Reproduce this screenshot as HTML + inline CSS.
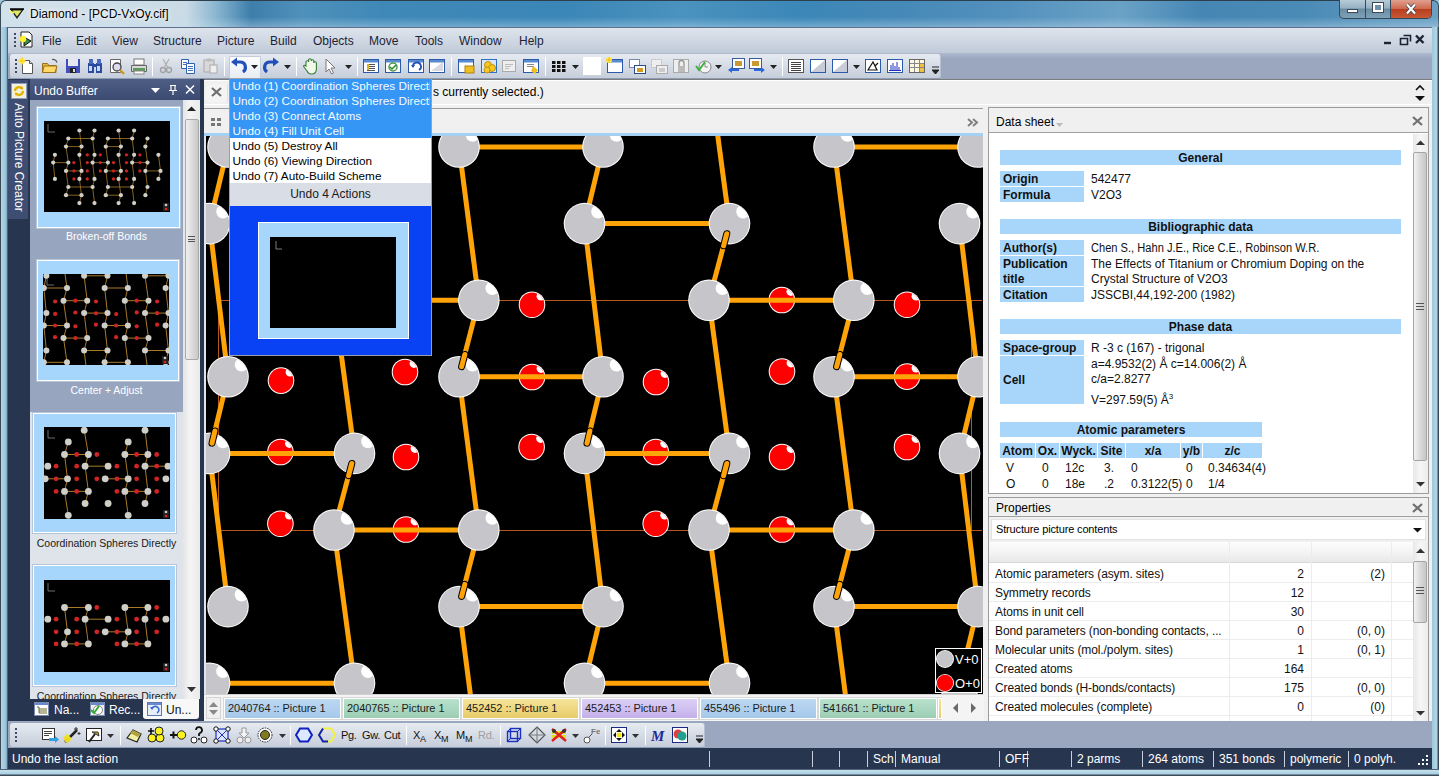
<!DOCTYPE html>
<html><head><meta charset="utf-8">
<style>
*{margin:0;padding:0;box-sizing:border-box}
html,body{width:1439px;height:776px;overflow:hidden;background:#9fc6dc;font-family:"Liberation Sans",sans-serif;font-size:12px;color:#000;line-height:1}
.a{position:absolute}
.nw{white-space:nowrap}
#title{left:0;top:0;width:1439px;height:28px;border-top:1px solid #2d3e4c;border-left:1px solid #3a4a58;border-right:1px solid #3a4a58;border-radius:6px 6px 0 0;background:linear-gradient(90deg,#d3e1ea 0,#cadbe6 185px,#8ab6d0 215px,#3d7eab 250px,#4f90bb 300px,#3f89b8 380px,#3a86b6 560px,#4a92bf 680px,#3b87b7 800px,#4689b8 900px,#5290bd 1000px,#6aa2c6 1120px,#4586b4 1200px,#4a8ab6 1300px,#6aa0c4 1439px)}
#title:after{content:"";position:absolute;left:0;top:16px;width:1439px;height:12px;background:linear-gradient(rgba(255,255,255,0),rgba(200,225,240,.45))}
#menubar{left:8px;top:27px;width:1424px;height:26px;background:linear-gradient(#dde4ed,#cdd5e1 60%,#bfc9d8);border-top:1px solid #5f6f8c}
.mi{top:41px;transform:translateY(-50%);color:#1b2336;font-size:12px}
#tbrow{left:8px;top:53px;width:1424px;height:27px;background:linear-gradient(#b0bbcf,#9aa7bf 20%,#9aa7bf)}
.tb{background:linear-gradient(#e6ebf1,#d6dce6 50%,#c6cedb);border-radius:3px;border-bottom:1px solid #8e9bb4;border-right:1px solid #b6c0d2}
.sep{width:1px;background:#9aa6bb;border-right:1px solid #fff}
.grip{width:2px;background:repeating-linear-gradient(#3e4a66 0 2px,transparent 2px 4px)}
#leftdock{left:8px;top:79px;width:196px;height:643px;background:#28354f}
#center{left:204px;top:80px;width:1228px;height:642px;background:#f0f0f0}
#info{left:204px;top:79px;width:1228px;height:26px;background:linear-gradient(#7c7c7c 0,#7c7c7c 1px,#fdfdfd 1px,#fdfdfd 2px,#f0f0f0 2px);border-bottom:1px solid #fff}
#view{left:206px;top:136px;width:777px;height:558px;background:#000;overflow:hidden}
#btbrow{left:8px;top:721px;width:1424px;height:27px;background:#9aa7bf}
#status{left:8px;top:748px;width:1424px;height:21px;background:#28354f;color:#fff}
.st{transform:translateY(-50%);font-size:12px;color:#fff}
.ss{top:3px;width:1px;height:16px;background:#c8d0e0}
</style></head><body>
<!-- TITLE -->
<div id="title" class="a"></div>
<svg class="a" style="left:9px;top:6px" width="16" height="14" viewBox="0 0 16 14"><path d="M1 3h14L8 13z" fill="#1d1d1d"/><path d="M3.5 4.5h9L8 10.5z" fill="#dfe86a"/><path d="M1 3h14" stroke="#000" stroke-width="1.5"/><path d="M0 5L5 7" stroke="#ffff40" stroke-width="1.5"/></svg>
<div class="a nw" style="left:30px;top:8px;font-size:12px;color:#000;text-shadow:0 0 6px #fff,0 0 3px #fff">Diamond - [PCD-VxOy.cif]</div>
<!-- caption buttons -->
<div class="a" style="left:1339px;top:0;width:93px;height:19px;border:1px solid #34485a;border-top:none;border-radius:0 0 5px 5px;overflow:hidden;background:linear-gradient(#b9ccd8,#94b0c2 45%,#6a8ca2 50%,#7da2b8)">
 <div class="a" style="left:25px;top:0;width:1px;height:19px;background:#34485a"></div>
 <div class="a" style="left:50px;top:0;width:42px;height:19px;background:linear-gradient(#e0a090,#cf6a50 45%,#b8401f 50%,#c85a38);border-left:1px solid #34485a"></div>
 <div class="a" style="left:7px;top:9px;width:11px;height:4px;background:#fff;border:1px solid #3a4858"></div>
 <div class="a" style="left:33px;top:3px;width:10px;height:9px;border:2px solid #fff;outline:1px solid #3a4858;background:#7090a8"></div>
 <svg class="a" style="left:64px;top:3px" width="14" height="12" viewBox="0 0 14 12"><path d="M3 1.5L11 10.5M11 1.5L3 10.5" stroke="#3a4050" stroke-width="3.6"/><path d="M3 1.5L11 10.5M11 1.5L3 10.5" stroke="#fff" stroke-width="2.2"/></svg>
</div>
<!-- FRAME -->
<div class="a" style="left:0;top:27px;width:8px;height:749px;background:linear-gradient(90deg,#3c4a58 0,#3c4a58 1px,#b4d6e6 1px,#9ec8dc 5px,#7fa8c0 7px,#50627a 7px)"></div>
<div class="a" style="left:1431px;top:27px;width:8px;height:749px;background:linear-gradient(90deg,#50627a 0,#50627a 1px,#9ec8dc 1px,#b4d6e6 6px,#3c4a58 7px)"></div>
<div class="a" style="left:0;top:769px;width:1439px;height:7px;background:linear-gradient(#50627a 0,#50627a 1px,#c4e0ec 1px,#a8d0e2 5px,#3c4a58 6px)"></div>
<!-- MENU -->
<div id="menubar" class="a"></div>
<div class="a grip" style="left:14px;top:33px;height:14px"></div>
<svg class="a" style="left:18px;top:31px" width="17" height="18" viewBox="0 0 17 18"><path d="M3 1h8l3 3v12H3z" fill="#fff" stroke="#222"/><path d="M6 6l7 4-7 5z" fill="#3a8a4a" stroke="#111"/><circle cx="5" cy="8" r="3.2" fill="#ffef30"/></svg>
<div class="a mi nw" style="left:42px">File</div>
<div class="a mi nw" style="left:76px">Edit</div>
<div class="a mi nw" style="left:112px">View</div>
<div class="a mi nw" style="left:153px">Structure</div>
<div class="a mi nw" style="left:217px">Picture</div>
<div class="a mi nw" style="left:270px">Build</div>
<div class="a mi nw" style="left:313px">Objects</div>
<div class="a mi nw" style="left:369px">Move</div>
<div class="a mi nw" style="left:415px">Tools</div>
<div class="a mi nw" style="left:459px">Window</div>
<div class="a mi nw" style="left:519px">Help</div>
<svg class="a" style="left:1380px;top:33px" width="50" height="14" viewBox="0 0 50 14"><path d="M4 10h7" stroke="#1b2336" stroke-width="2.4"/><path d="M20.5 5.5h7v6h-7zM23.5 2.5h7v6" fill="none" stroke="#1b2336" stroke-width="1.6"/><path d="M36 2.5l7.5 7.5M43.5 2.5L36 10" stroke="#1b2336" stroke-width="2.4"/></svg>
<!-- TOOLBAR ROW -->
<div id="tbrow" class="a"></div>
<div class="a tb" style="left:10px;top:54px;width:931px;height:25px"></div>
<div class="a grip" style="left:15px;top:59px;height:15px"></div>
<svg class="a" style="left:18px;top:57px" width="18" height="18" viewBox="0 0 18 18"><path d="M4.5 3.5h7l3 3v10h-10z" fill="#fff" stroke="#555"/><path d="M11.5 3.5v3h3" fill="#ddd" stroke="#555"/><circle cx="4" cy="4" r="3" fill="#ffe860"/><path d="M4 0v8M0 4h8" stroke="#ffd000"/></svg>
<svg class="a" style="left:41px;top:57px" width="18" height="18" viewBox="0 0 18 18"><path d="M1.5 6.5h5l1.5 2h7v7h-13.5z" fill="#e8b830" stroke="#9a7020"/><path d="M3 9h13l-2 6.5H1.5z" fill="#ffd868" stroke="#9a7020"/><path d="M11 2.5a4 4 0 0 1 5 3" fill="none" stroke="#555" stroke-width="1.2"/></svg>
<svg class="a" style="left:64px;top:57px" width="18" height="18" viewBox="0 0 18 18"><rect x="2" y="2" width="14" height="14" fill="#4050b8"/><rect x="4" y="2" width="10" height="7" fill="#e8e8f0"/><rect x="6" y="11" width="6" height="5" fill="#222"/><rect x="9" y="12" width="2" height="3" fill="#ddd"/></svg>
<svg class="a" style="left:86px;top:57px" width="18" height="18" viewBox="0 0 18 18"><rect x="2" y="6" width="6" height="10" fill="#2a4aa0"/><rect x="10" y="6" width="6" height="10" fill="#2a4aa0"/><rect x="3" y="2" width="4" height="5" fill="#4a6ac0"/><rect x="11" y="2" width="4" height="5" fill="#4a6ac0"/><rect x="3" y="9" width="3" height="5" fill="#c8d8f8"/><rect x="11" y="9" width="3" height="5" fill="#c8d8f8"/><rect x="7" y="7" width="4" height="3" fill="#2a4aa0"/></svg>
<svg class="a" style="left:108px;top:57px" width="18" height="18" viewBox="0 0 18 18"><path d="M2.5 2.5h10v13h-10z" fill="#fff" stroke="#666"/><circle cx="9" cy="10" r="4" fill="#dde" stroke="#444" stroke-width="1.3"/><path d="M12 13l4 4" stroke="#c89a20" stroke-width="2.4"/></svg>
<svg class="a" style="left:130px;top:57px" width="18" height="18" viewBox="0 0 18 18"><rect x="4" y="2" width="10" height="6" fill="#fff" stroke="#777"/><path d="M1.5 8.5h15v6h-15z" fill="#d8d8d8" stroke="#666"/><rect x="3" y="11" width="12" height="3" fill="#5a9a5a"/><rect x="4" y="14" width="10" height="3" fill="#fff" stroke="#888"/></svg>
<div class="a sep" style="left:152px;top:57px;height:19px"></div>
<svg class="a" style="left:157px;top:57px" width="18" height="18" viewBox="0 0 18 18"><circle cx="6" cy="13" r="2.5" fill="none" stroke="#a0a0a0" stroke-width="1.3"/><circle cx="12" cy="13" r="2.5" fill="none" stroke="#a0a0a0" stroke-width="1.3"/><path d="M7 11L12 2M11 11L6 2" stroke="#b0b0b0" stroke-width="1.3"/></svg>
<svg class="a" style="left:179px;top:57px" width="18" height="18" viewBox="0 0 18 18"><path d="M2.5 2.5h7v9h-7z" fill="#fff" stroke="#3060b0"/><path d="M7.5 6.5h8v10h-8z" fill="#fff" stroke="#3060b0"/><path d="M9 9.5h5M9 11.5h5M9 13.5h5M4 5.5h4M4 7.5h4" stroke="#4070c0"/></svg>
<svg class="a" style="left:201px;top:57px" width="18" height="18" viewBox="0 0 18 18"><rect x="3" y="3" width="10" height="12" fill="#d8d8d8" stroke="#a8a8a8"/><rect x="6" y="1.5" width="4" height="3" fill="#bbb"/><rect x="9" y="8" width="7" height="8" fill="#eee" stroke="#aaa"/></svg>
<div class="a sep" style="left:224px;top:57px;height:19px"></div>
<div class="a" style="left:229px;top:56px;width:32px;height:23px;background:linear-gradient(#fbfcfd,#e6ebf2);border:1px solid #c4cbd8;border-bottom:none;border-radius:2px 2px 0 0"></div>
<svg class="a" style="left:230px;top:57px" width="18" height="18" viewBox="0 0 18 18"><path d="M13 15c4-3 3-10-3-10H5" fill="none" stroke="#2050b8" stroke-width="3.2"/><path d="M1 5l6-4.5v9z" fill="#2050b8"/></svg>
<svg class="a" style="left:251px;top:65px" width="7" height="4" viewBox="0 0 7 4"><path d="M0 0h7L3.5 4z" fill="#222"/></svg>
<svg class="a" style="left:262px;top:57px" width="18" height="18" viewBox="0 0 18 18"><path d="M5 15c-4-3-3-10 3-10h5" fill="none" stroke="#2050b8" stroke-width="3.2"/><path d="M17 5l-6-4.5v9z" fill="#2050b8"/></svg>
<svg class="a" style="left:284px;top:65px" width="7" height="4" viewBox="0 0 7 4"><path d="M0 0h7L3.5 4z" fill="#222"/></svg>
<div class="a sep" style="left:296px;top:57px;height:19px"></div>
<svg class="a" style="left:302px;top:57px" width="18" height="18" viewBox="0 0 18 18"><path d="M4 9V5a1.3 1.3 0 0 1 2.6 0V3a1.3 1.3 0 0 1 2.6 0v1a1.3 1.3 0 0 1 2.6 0v2a1.3 1.3 0 0 1 2.6 0v6c0 3-2 5-5 5H9c-2 0-3-1-4-3L2 10c-1-1 0-2 1-1.5z" fill="#f0f8e8" stroke="#3a7a3a" stroke-width="1.1"/></svg>
<svg class="a" style="left:321px;top:57px" width="18" height="18" viewBox="0 0 18 18"><path d="M5 2v13l3-3 2.5 5 2-1-2.5-5h4z" fill="#fff" stroke="#777"/></svg>
<svg class="a" style="left:345px;top:65px" width="7" height="4" viewBox="0 0 7 4"><path d="M0 0h7L3.5 4z" fill="#222"/></svg>
<div class="a sep" style="left:357px;top:57px;height:19px"></div>
<svg class="a" style="left:362px;top:57px" width="18" height="18" viewBox="0 0 18 18"><rect x="1.5" y="2.5" width="15" height="13" fill="#fff" stroke="#2a5aa8"/><rect x="2" y="3" width="14" height="2.5" fill="#5a8ad0"/><path d="M5 7.5h8M5 9.5h8M5 11.5h8M5 13.5h8" stroke="#555"/><rect x="5" y="7" width="2" height="6" fill="#dfb020"/></svg>
<svg class="a" style="left:384px;top:57px" width="18" height="18" viewBox="0 0 18 18"><rect x="1.5" y="2.5" width="15" height="13" fill="#fff" stroke="#2a5aa8"/><rect x="2" y="3" width="14" height="2.5" fill="#5a8ad0"/><circle cx="9" cy="10" r="4" fill="#fff" stroke="#4a9a4a" stroke-width="1.5"/><path d="M6 10l2 2 4-4" stroke="#2a8a2a" stroke-width="1.5" fill="none"/></svg>
<svg class="a" style="left:407px;top:57px" width="18" height="18" viewBox="0 0 18 18"><rect x="1.5" y="2.5" width="15" height="13" fill="#fff" stroke="#2a5aa8"/><rect x="2" y="3" width="14" height="2.5" fill="#5a8ad0"/><path d="M12 13a4 4 0 1 0-6-3" fill="none" stroke="#2050b8" stroke-width="1.8"/><path d="M4 8l2 3 2-3z" fill="#2050b8"/></svg>
<svg class="a" style="left:428px;top:57px" width="18" height="18" viewBox="0 0 18 18"><rect x="1.5" y="2.5" width="15" height="13" fill="#fff" stroke="#2a5aa8"/><rect x="2" y="3" width="14" height="2.5" fill="#5a8ad0"/><path d="M3 14L15 5v9z" fill="#d8d8e0"/></svg>
<div class="a sep" style="left:451px;top:57px;height:19px"></div>
<svg class="a" style="left:457px;top:57px" width="18" height="18" viewBox="0 0 18 18"><rect x="1.5" y="2.5" width="15" height="13" fill="#fff" stroke="#2a5aa8"/><rect x="2" y="3" width="14" height="2.5" fill="#5a8ad0"/><rect x="8" y="9" width="9" height="7" fill="#f0c020" stroke="#b08010"/></svg>
<svg class="a" style="left:480px;top:57px" width="18" height="18" viewBox="0 0 18 18"><rect x="1.5" y="2.5" width="15" height="13" fill="#d8e8f8" stroke="#3070c0"/><circle cx="8" cy="8" r="3.5" fill="#f8c820" stroke="#c09010"/><circle cx="12" cy="11" r="3.5" fill="#f8c820" stroke="#c09010"/><circle cx="7" cy="13" r="3" fill="#f8c820" stroke="#c09010"/></svg>
<svg class="a" style="left:500px;top:57px" width="18" height="18" viewBox="0 0 18 18"><rect x="2.5" y="3.5" width="13" height="11" fill="#eee" stroke="#aaa"/><path d="M5 7.5h8M5 9.5h6M5 11.5h4" stroke="#bbb"/></svg>
<svg class="a" style="left:522px;top:57px" width="18" height="18" viewBox="0 0 18 18"><rect x="1.5" y="2.5" width="15" height="13" fill="#fff" stroke="#2a5aa8"/><rect x="2" y="3" width="14" height="2.5" fill="#5a8ad0"/><path d="M5 7.5h7M5 9.5h7" stroke="#888"/><path d="M11 9l5 4-3 4-4-3z" fill="#f0c020"/></svg>
<div class="a sep" style="left:545px;top:57px;height:19px"></div>
<svg class="a" style="left:550px;top:57px" width="18" height="18" viewBox="0 0 18 18"><rect x="2" y="4" width="3.5" height="3" fill="#111"/><rect x="2" y="8" width="3.5" height="3" fill="#111"/><rect x="2" y="12" width="3.5" height="3" fill="#111"/><rect x="7" y="4" width="3.5" height="3" fill="#111"/><rect x="7" y="8" width="3.5" height="3" fill="#111"/><rect x="7" y="12" width="3.5" height="3" fill="#111"/><rect x="12" y="4" width="3.5" height="3" fill="#111"/><rect x="12" y="8" width="3.5" height="3" fill="#111"/><rect x="12" y="12" width="3.5" height="3" fill="#111"/></svg>
<svg class="a" style="left:572px;top:65px" width="7" height="4" viewBox="0 0 7 4"><path d="M0 0h7L3.5 4z" fill="#222"/></svg>
<svg class="a" style="left:583px;top:57px" width="18" height="18" viewBox="0 0 18 18"><rect x="0" y="0" width="18" height="18" fill="#fff"/></svg>
<svg class="a" style="left:606px;top:57px" width="18" height="18" viewBox="0 0 18 18"><rect x="1.5" y="2.5" width="15" height="13" fill="#fff" stroke="#2a5aa8"/><rect x="2" y="3" width="14" height="2.5" fill="#5a8ad0"/><circle cx="3" cy="3" r="3" fill="#ffe860"/><path d="M3 0v6M0 3h6" stroke="#f8c000"/></svg>
<svg class="a" style="left:628px;top:57px" width="18" height="18" viewBox="0 0 18 18"><rect x="1.5" y="2.5" width="10" height="8" fill="#fff" stroke="#7a8aa8"/><rect x="6.5" y="8.5" width="11" height="8" fill="#fff" stroke="#2a4a88"/><rect x="9" y="11" width="6" height="4" fill="#d09a20"/></svg>
<svg class="a" style="left:650px;top:57px" width="18" height="18" viewBox="0 0 18 18"><rect x="1.5" y="2.5" width="10" height="8" fill="#eee" stroke="#bbb" stroke-dasharray="2 1"/><rect x="6.5" y="8.5" width="11" height="8" fill="#eee" stroke="#aaa"/><rect x="9" y="11" width="6" height="4" fill="#ccc"/></svg>
<svg class="a" style="left:672px;top:57px" width="18" height="18" viewBox="0 0 18 18"><rect x="1.5" y="2.5" width="15" height="13" fill="#eee" stroke="#aaa"/><rect x="6" y="9" width="7" height="6" fill="#bbb"/><path d="M7 9V6a2.5 2.5 0 0 1 5 0v3" fill="none" stroke="#999" stroke-width="1.3"/></svg>
<svg class="a" style="left:694px;top:57px" width="18" height="18" viewBox="0 0 18 18"><circle cx="11" cy="10" r="6" fill="#f4f4f4" stroke="#888"/><path d="M11 6v4h3" stroke="#888" fill="none"/><path d="M2 9l3 4 6-8" stroke="#40b040" stroke-width="2" fill="none"/></svg>
<svg class="a" style="left:715px;top:65px" width="7" height="4" viewBox="0 0 7 4"><path d="M0 0h7L3.5 4z" fill="#222"/></svg>
<svg class="a" style="left:727px;top:57px" width="18" height="18" viewBox="0 0 18 18"><rect x="5.5" y="1.5" width="12" height="10" fill="#fff" stroke="#3a5a9a"/><rect x="8" y="4" width="7" height="5" fill="#c89a30"/><path d="M1 13l4-3v2h7v2H5v2z" fill="#2a6ad8"/></svg>
<svg class="a" style="left:748px;top:57px" width="18" height="18" viewBox="0 0 18 18"><rect x="1.5" y="1.5" width="12" height="10" fill="#fff" stroke="#3a5a9a"/><rect x="4" y="4" width="7" height="5" fill="#c89a30"/><path d="M17 13l-4-3v2H6v2h7v2z" fill="#2a6ad8"/></svg>
<svg class="a" style="left:770px;top:65px" width="7" height="4" viewBox="0 0 7 4"><path d="M0 0h7L3.5 4z" fill="#222"/></svg>
<div class="a sep" style="left:782px;top:57px;height:19px"></div>
<svg class="a" style="left:787px;top:57px" width="18" height="18" viewBox="0 0 18 18"><rect x="1.5" y="2.5" width="15" height="13" fill="#fff" stroke="#555"/><path d="M4 5.5h10M4 7.5h10M4 9.5h10M4 11.5h10M4 13.5h10" stroke="#444"/></svg>
<svg class="a" style="left:809px;top:57px" width="18" height="18" viewBox="0 0 18 18"><rect x="1.5" y="2.5" width="15" height="13" fill="#fff" stroke="#2a5aa8"/><path d="M2 15L16 3v12z" fill="#c8ccd8"/></svg>
<svg class="a" style="left:831px;top:57px" width="18" height="18" viewBox="0 0 18 18"><rect x="1.5" y="2.5" width="15" height="13" fill="#fff" stroke="#2a5aa8"/><path d="M2 15L16 3v12z" fill="#c8ccd8"/></svg>
<svg class="a" style="left:853px;top:65px" width="7" height="4" viewBox="0 0 7 4"><path d="M0 0h7L3.5 4z" fill="#222"/></svg>
<svg class="a" style="left:864px;top:57px" width="18" height="18" viewBox="0 0 18 18"><rect x="1.5" y="2.5" width="15" height="13" fill="#fff" stroke="#2a5aa8"/><path d="M4 13L9 5l4 8zM11 9l3-3" fill="none" stroke="#111" stroke-width="1.2"/></svg>
<svg class="a" style="left:886px;top:57px" width="18" height="18" viewBox="0 0 18 18"><rect x="1.5" y="2.5" width="15" height="13" fill="#fff" stroke="#2a5aa8"/><path d="M3 13.5h12M5 13V8M7 13V6M9 13V9M11 13V5M13 13V10" stroke="#2030c0"/></svg>
<svg class="a" style="left:908px;top:57px" width="18" height="18" viewBox="0 0 18 18"><rect x="1.5" y="2.5" width="15" height="13" fill="#fff8e0" stroke="#666"/><path d="M2 6.5h14M2 10.5h14M6.5 3v12M11.5 3v12" stroke="#888"/><rect x="12" y="7" width="4" height="3" fill="#f0c040"/><rect x="12" y="11" width="4" height="4" fill="#f0c040"/></svg>
<svg class="a" style="left:932px;top:66px" width="7" height="8" viewBox="0 0 7 8"><path d="M0 1h7M0 4h7L3.5 8z" stroke="#222" fill="#222"/></svg>
<!-- LEFT DOCK -->
<div id="leftdock" class="a"></div>
<div class="a" style="left:8px;top:80px;width:20px;height:139px;background:#3e4d72"></div>
<svg class="a" style="left:11px;top:83px" width="16" height="16" viewBox="0 0 16 16"><rect x="0.5" y="0.5" width="15" height="15" fill="#f4f0d8" stroke="#8a9ac0"/><path d="M4 8a4 4 0 0 1 7-2.5M12 8a4 4 0 0 1-7 2.5" fill="none" stroke="#e0b000" stroke-width="2.2"/><path d="M11 3l1.5 3.5-3.5-.5zM5 13l-1.5-3.5 3.5.5z" fill="#e0b000"/></svg>
<div class="a nw" style="left:26px;top:103px;transform-origin:0 0;transform:rotate(90deg);color:#fff;font-size:12px;line-height:14px">Auto Picture Creator</div>
<div class="a" style="left:30px;top:79px;width:170px;height:21px;background:linear-gradient(#4e5e84,#3a4a70)"></div>
<div class="a nw" style="left:34px;top:85px;color:#fff;font-size:12px">Undo Buffer</div>
<svg class="a" style="left:150px;top:84px" width="48" height="12" viewBox="0 0 48 12"><path d="M1 4h9L5.5 9z" fill="#fff"/><path d="M20 1.5h6M21 1.5v5h4v-5M19 6.5h8M23 6.5V11" fill="none" stroke="#fff" stroke-width="1.2"/><path d="M36 1.5l8 8M44 1.5l-8 8" stroke="#fff" stroke-width="1.5"/></svg>
<div class="a" style="left:30px;top:100px;width:153px;height:312px;background:#98a5bf"></div>
<div class="a" style="left:30px;top:412px;width:153px;height:287px;background:#dfe3ea"></div>
<div class="a" style="left:183px;top:100px;width:17px;height:599px;background:linear-gradient(90deg,#e4e4e4,#f4f4f4 40%,#eaeaea)"></div>
<svg class="a" style="left:187px;top:106px" width="9" height="6" viewBox="0 0 9 6"><path d="M0 5l4.5-4.5L9 5z" fill="#222"/></svg>
<div class="a" style="left:185px;top:119px;width:14px;height:241px;background:linear-gradient(90deg,#f0f0f0,#dcdcdc 50%,#c8c8c8);border:1px solid #a8a8a8;border-radius:2px"></div>
<div class="a" style="left:188px;top:236px;width:7px;height:6px;border-top:1px solid #555;border-bottom:1px solid #555"><div style="margin-top:1.5px;border-top:1px solid #555"></div></div>
<svg class="a" style="left:187px;top:687px" width="9" height="6" viewBox="0 0 9 6"><path d="M0 0h9L4.5 5z" fill="#333"/></svg>
<div class="a" style="left:37px;top:107px;width:143px;height:121px;background:#a6d6fb;border:1px solid #fff;box-shadow:0 0 0 1px #b8c4d8"></div>
<svg class="a" style="left:44px;top:121px" width="126" height="91" viewBox="0 0 126 91"><rect width="126" height="91" fill="#000"/><path d="M4 3v8h7" stroke="#888" stroke-width="0.8" fill="none"/><g stroke="#a87a2a" stroke-width="0.8"><line x1="24.3" y1="17.5" x2="48.6" y2="17.5"/><line x1="63.9" y1="17.5" x2="88.2" y2="17.5"/><line x1="22.0" y1="25.6" x2="37.5" y2="25.6"/><line x1="61.8" y1="25.6" x2="76.9" y2="25.6"/><line x1="9.2" y1="41.6" x2="24.3" y2="41.6"/><line x1="48.6" y1="41.6" x2="63.9" y2="41.6"/><line x1="88.2" y1="41.6" x2="103.5" y2="41.6"/><line x1="22.0" y1="49.9" x2="37.5" y2="49.9"/><line x1="61.8" y1="49.9" x2="76.9" y2="49.9"/><line x1="101.4" y1="49.9" x2="116.5" y2="49.9"/><line x1="24.3" y1="66.0" x2="48.6" y2="66.0"/><line x1="63.9" y1="66.0" x2="88.2" y2="66.0"/><line x1="22.0" y1="74.2" x2="37.5" y2="74.2"/><line x1="61.8" y1="74.2" x2="76.9" y2="74.2"/><line x1="24.3" y1="17.5" x2="22.0" y2="25.6"/><line x1="22.0" y1="25.6" x2="24.3" y2="41.6"/><line x1="24.3" y1="41.6" x2="22.0" y2="49.9"/><line x1="22.0" y1="49.9" x2="24.3" y2="66.0"/><line x1="24.3" y1="66.0" x2="22.0" y2="74.2"/><line x1="35.4" y1="9.5" x2="37.5" y2="25.6"/><line x1="37.5" y1="25.6" x2="35.4" y2="33.8"/><line x1="35.4" y1="33.8" x2="37.5" y2="49.9"/><line x1="37.5" y1="49.9" x2="35.4" y2="57.9"/><line x1="35.4" y1="57.9" x2="37.5" y2="74.2"/><line x1="37.5" y1="74.2" x2="35.4" y2="82.1"/><line x1="50.5" y1="9.5" x2="48.6" y2="17.5"/><line x1="48.6" y1="17.5" x2="50.5" y2="33.8"/><line x1="50.5" y1="33.8" x2="48.6" y2="41.6"/><line x1="48.6" y1="41.6" x2="50.5" y2="57.9"/><line x1="50.5" y1="57.9" x2="48.6" y2="66.0"/><line x1="48.6" y1="66.0" x2="50.5" y2="82.1"/><line x1="63.9" y1="17.5" x2="61.8" y2="25.6"/><line x1="61.8" y1="25.6" x2="63.9" y2="41.6"/><line x1="63.9" y1="41.6" x2="61.8" y2="49.9"/><line x1="61.8" y1="49.9" x2="63.9" y2="66.0"/><line x1="63.9" y1="66.0" x2="61.8" y2="74.2"/><line x1="74.6" y1="9.5" x2="76.9" y2="25.6"/><line x1="76.9" y1="25.6" x2="74.6" y2="33.8"/><line x1="74.6" y1="33.8" x2="76.9" y2="49.9"/><line x1="76.9" y1="49.9" x2="74.6" y2="57.9"/><line x1="74.6" y1="57.9" x2="76.9" y2="74.2"/><line x1="76.9" y1="74.2" x2="74.6" y2="82.1"/><line x1="90.1" y1="9.5" x2="88.2" y2="17.5"/><line x1="88.2" y1="17.5" x2="90.1" y2="33.8"/><line x1="90.1" y1="33.8" x2="88.2" y2="41.6"/><line x1="88.2" y1="41.6" x2="90.1" y2="57.9"/><line x1="90.1" y1="57.9" x2="88.2" y2="66.0"/><line x1="88.2" y1="66.0" x2="90.1" y2="82.1"/><line x1="103.5" y1="17.5" x2="101.4" y2="25.6"/><line x1="101.4" y1="25.6" x2="103.5" y2="41.6"/><line x1="103.5" y1="41.6" x2="101.4" y2="49.9"/><line x1="101.4" y1="49.9" x2="103.5" y2="66.0"/><line x1="103.5" y1="66.0" x2="101.4" y2="74.2"/><line x1="10.9" y1="33.8" x2="9.2" y2="41.6"/><line x1="9.2" y1="41.6" x2="10.9" y2="57.9"/><line x1="114.4" y1="33.8" x2="116.5" y2="49.9"/><line x1="116.5" y1="49.9" x2="114.4" y2="57.9"/></g><circle cx="43.3" cy="33.8" r="1.6" fill="#d02424"/><circle cx="56.3" cy="33.8" r="1.6" fill="#d02424"/><circle cx="82.5" cy="33.8" r="1.6" fill="#d02424"/><circle cx="95.9" cy="33.8" r="1.6" fill="#d02424"/><circle cx="29.9" cy="41.6" r="1.6" fill="#d02424"/><circle cx="43.3" cy="41.6" r="1.6" fill="#d02424"/><circle cx="56.3" cy="41.6" r="1.6" fill="#d02424"/><circle cx="69.5" cy="41.6" r="1.6" fill="#d02424"/><circle cx="82.5" cy="41.6" r="1.6" fill="#d02424"/><circle cx="95.9" cy="41.6" r="1.6" fill="#d02424"/><circle cx="29.9" cy="49.9" r="1.6" fill="#d02424"/><circle cx="43.3" cy="49.9" r="1.6" fill="#d02424"/><circle cx="56.3" cy="49.9" r="1.6" fill="#d02424"/><circle cx="69.5" cy="49.9" r="1.6" fill="#d02424"/><circle cx="82.5" cy="49.9" r="1.6" fill="#d02424"/><circle cx="95.9" cy="49.9" r="1.6" fill="#d02424"/><circle cx="29.9" cy="57.9" r="1.6" fill="#d02424"/><circle cx="43.3" cy="57.9" r="1.6" fill="#d02424"/><circle cx="69.5" cy="57.9" r="1.6" fill="#d02424"/><circle cx="82.5" cy="57.9" r="1.6" fill="#d02424"/><circle cx="35.4" cy="9.5" r="2.1" fill="#cfcfc8"/><circle cx="50.5" cy="9.5" r="2.1" fill="#cfcfc8"/><circle cx="74.6" cy="9.5" r="2.1" fill="#cfcfc8"/><circle cx="90.1" cy="9.5" r="2.1" fill="#cfcfc8"/><circle cx="24.3" cy="17.5" r="2.1" fill="#cfcfc8"/><circle cx="48.6" cy="17.5" r="2.1" fill="#cfcfc8"/><circle cx="63.9" cy="17.5" r="2.1" fill="#cfcfc8"/><circle cx="88.2" cy="17.5" r="2.1" fill="#cfcfc8"/><circle cx="103.5" cy="17.5" r="2.1" fill="#cfcfc8"/><circle cx="22.0" cy="25.6" r="2.1" fill="#cfcfc8"/><circle cx="37.5" cy="25.6" r="2.1" fill="#cfcfc8"/><circle cx="61.8" cy="25.6" r="2.1" fill="#cfcfc8"/><circle cx="76.9" cy="25.6" r="2.1" fill="#cfcfc8"/><circle cx="101.4" cy="25.6" r="2.1" fill="#cfcfc8"/><circle cx="10.9" cy="33.8" r="2.1" fill="#cfcfc8"/><circle cx="35.4" cy="33.8" r="2.1" fill="#cfcfc8"/><circle cx="50.5" cy="33.8" r="2.1" fill="#cfcfc8"/><circle cx="74.6" cy="33.8" r="2.1" fill="#cfcfc8"/><circle cx="90.1" cy="33.8" r="2.1" fill="#cfcfc8"/><circle cx="114.4" cy="33.8" r="2.1" fill="#cfcfc8"/><circle cx="9.2" cy="41.6" r="2.1" fill="#cfcfc8"/><circle cx="24.3" cy="41.6" r="2.1" fill="#cfcfc8"/><circle cx="48.6" cy="41.6" r="2.1" fill="#cfcfc8"/><circle cx="63.9" cy="41.6" r="2.1" fill="#cfcfc8"/><circle cx="88.2" cy="41.6" r="2.1" fill="#cfcfc8"/><circle cx="103.5" cy="41.6" r="2.1" fill="#cfcfc8"/><circle cx="22.0" cy="49.9" r="2.1" fill="#cfcfc8"/><circle cx="37.5" cy="49.9" r="2.1" fill="#cfcfc8"/><circle cx="61.8" cy="49.9" r="2.1" fill="#cfcfc8"/><circle cx="76.9" cy="49.9" r="2.1" fill="#cfcfc8"/><circle cx="101.4" cy="49.9" r="2.1" fill="#cfcfc8"/><circle cx="116.5" cy="49.9" r="2.1" fill="#cfcfc8"/><circle cx="10.9" cy="57.9" r="2.1" fill="#cfcfc8"/><circle cx="35.4" cy="57.9" r="2.1" fill="#cfcfc8"/><circle cx="50.5" cy="57.9" r="2.1" fill="#cfcfc8"/><circle cx="74.6" cy="57.9" r="2.1" fill="#cfcfc8"/><circle cx="90.1" cy="57.9" r="2.1" fill="#cfcfc8"/><circle cx="114.4" cy="57.9" r="2.1" fill="#cfcfc8"/><circle cx="24.3" cy="66.0" r="2.1" fill="#cfcfc8"/><circle cx="48.6" cy="66.0" r="2.1" fill="#cfcfc8"/><circle cx="63.9" cy="66.0" r="2.1" fill="#cfcfc8"/><circle cx="88.2" cy="66.0" r="2.1" fill="#cfcfc8"/><circle cx="103.5" cy="66.0" r="2.1" fill="#cfcfc8"/><circle cx="22.0" cy="74.2" r="2.1" fill="#cfcfc8"/><circle cx="37.5" cy="74.2" r="2.1" fill="#cfcfc8"/><circle cx="61.8" cy="74.2" r="2.1" fill="#cfcfc8"/><circle cx="76.9" cy="74.2" r="2.1" fill="#cfcfc8"/><circle cx="101.4" cy="74.2" r="2.1" fill="#cfcfc8"/><circle cx="35.4" cy="82.1" r="2.1" fill="#cfcfc8"/><circle cx="50.5" cy="82.1" r="2.1" fill="#cfcfc8"/><circle cx="74.6" cy="82.1" r="2.1" fill="#cfcfc8"/><circle cx="90.1" cy="82.1" r="2.1" fill="#cfcfc8"/><rect x="119" y="82" width="6" height="8" fill="#222"/><circle cx="122" cy="84" r="1.3" fill="#ccc"/><circle cx="122" cy="88" r="1.3" fill="#d22"/></svg>
<div class="a nw" style="left:30px;width:153px;top:231px;text-align:center;color:#fff;font-size:10.5px">Broken-off Bonds</div>
<div class="a" style="left:37px;top:260px;width:142px;height:121px;background:#a6d6fb;border:1px solid #fff;box-shadow:0 0 0 1px #b8c4d8"></div>
<svg class="a" style="left:43px;top:274px" width="126" height="91" viewBox="0 0 126 91"><rect width="126" height="91" fill="#000"/><path d="M4 3v8h7" stroke="#888" stroke-width="0.8" fill="none"/><g stroke="#a87a2a" stroke-width="1"><line x1="41.1" y1="1.8" x2="64.5" y2="1.8"/><line x1="102.0" y1="1.8" x2="125.5" y2="1.8"/><line x1="41.1" y1="39.1" x2="64.5" y2="39.1"/><line x1="102.0" y1="39.1" x2="125.5" y2="39.1"/><line x1="41.1" y1="76.5" x2="64.5" y2="76.5"/><line x1="102.0" y1="76.5" x2="125.5" y2="76.5"/><line x1="0.8" y1="14.0" x2="24.0" y2="14.0"/><line x1="61.6" y1="14.0" x2="84.9" y2="14.0"/><line x1="0.8" y1="51.5" x2="24.0" y2="51.5"/><line x1="61.6" y1="51.5" x2="84.9" y2="51.5"/><line x1="0.8" y1="88.3" x2="24.0" y2="88.3"/><line x1="61.6" y1="88.3" x2="84.9" y2="88.3"/><line x1="20.5" y1="26.7" x2="44.2" y2="26.7"/><line x1="81.8" y1="26.7" x2="105.5" y2="26.7"/><line x1="20.5" y1="64.1" x2="44.2" y2="64.1"/><line x1="81.8" y1="64.1" x2="105.5" y2="64.1"/><line x1="0.8" y1="-10.8" x2="3.4" y2="1.8"/><line x1="3.4" y1="1.8" x2="0.8" y2="14.0"/><line x1="0.8" y1="14.0" x2="3.4" y2="39.1"/><line x1="3.4" y1="39.1" x2="0.8" y2="51.5"/><line x1="0.8" y1="51.5" x2="3.4" y2="76.5"/><line x1="3.4" y1="76.5" x2="0.8" y2="88.3"/><line x1="0.8" y1="88.3" x2="3.4" y2="113.4"/><line x1="61.6" y1="-10.8" x2="64.5" y2="1.8"/><line x1="64.5" y1="1.8" x2="61.6" y2="14.0"/><line x1="61.6" y1="14.0" x2="64.5" y2="39.1"/><line x1="64.5" y1="39.1" x2="61.6" y2="51.5"/><line x1="61.6" y1="51.5" x2="64.5" y2="76.5"/><line x1="64.5" y1="76.5" x2="61.6" y2="88.3"/><line x1="61.6" y1="88.3" x2="64.5" y2="113.4"/><line x1="122.6" y1="-10.8" x2="125.5" y2="1.8"/><line x1="125.5" y1="1.8" x2="122.6" y2="14.0"/><line x1="122.6" y1="14.0" x2="125.5" y2="39.1"/><line x1="125.5" y1="39.1" x2="122.6" y2="51.5"/><line x1="122.6" y1="51.5" x2="125.5" y2="76.5"/><line x1="125.5" y1="76.5" x2="122.6" y2="88.3"/><line x1="122.6" y1="88.3" x2="125.5" y2="113.4"/><line x1="20.5" y1="-10.8" x2="24.0" y2="14.0"/><line x1="24.0" y1="14.0" x2="20.5" y2="26.7"/><line x1="20.5" y1="26.7" x2="24.0" y2="51.5"/><line x1="24.0" y1="51.5" x2="20.5" y2="64.1"/><line x1="20.5" y1="64.1" x2="24.0" y2="88.3"/><line x1="24.0" y1="88.3" x2="20.5" y2="100.9"/><line x1="81.8" y1="-10.8" x2="84.9" y2="14.0"/><line x1="84.9" y1="14.0" x2="81.8" y2="26.7"/><line x1="81.8" y1="26.7" x2="84.9" y2="51.5"/><line x1="84.9" y1="51.5" x2="81.8" y2="64.1"/><line x1="81.8" y1="64.1" x2="84.9" y2="88.3"/><line x1="84.9" y1="88.3" x2="81.8" y2="100.9"/><line x1="44.2" y1="-10.8" x2="41.1" y2="1.8"/><line x1="41.1" y1="1.8" x2="44.2" y2="26.7"/><line x1="44.2" y1="26.7" x2="41.1" y2="39.1"/><line x1="41.1" y1="39.1" x2="44.2" y2="64.1"/><line x1="44.2" y1="64.1" x2="41.1" y2="76.5"/><line x1="41.1" y1="76.5" x2="44.2" y2="101.5"/><line x1="105.5" y1="-10.8" x2="102.0" y2="1.8"/><line x1="102.0" y1="1.8" x2="105.5" y2="26.7"/><line x1="105.5" y1="26.7" x2="102.0" y2="39.1"/><line x1="102.0" y1="39.1" x2="105.5" y2="64.1"/><line x1="105.5" y1="64.1" x2="102.0" y2="76.5"/><line x1="102.0" y1="76.5" x2="105.5" y2="101.5"/></g><circle cx="12.1" cy="27.5" r="2.1" fill="#d02424"/><circle cx="32.4" cy="26.7" r="2.1" fill="#d02424"/><circle cx="53.0" cy="27.5" r="2.1" fill="#d02424"/><circle cx="93.7" cy="26.7" r="2.1" fill="#d02424"/><circle cx="114.1" cy="27.5" r="2.1" fill="#d02424"/><circle cx="12.1" cy="39.9" r="2.1" fill="#d02424"/><circle cx="32.3" cy="38.5" r="2.1" fill="#d02424"/><circle cx="53.0" cy="39.3" r="2.1" fill="#d02424"/><circle cx="73.2" cy="40.1" r="2.1" fill="#d02424"/><circle cx="93.7" cy="38.4" r="2.1" fill="#d02424"/><circle cx="114.1" cy="39.2" r="2.1" fill="#d02424"/><circle cx="12.0" cy="51.5" r="2.1" fill="#d02424"/><circle cx="32.4" cy="52.3" r="2.1" fill="#d02424"/><circle cx="52.9" cy="50.7" r="2.1" fill="#d02424"/><circle cx="73.1" cy="51.5" r="2.1" fill="#d02424"/><circle cx="93.7" cy="52.3" r="2.1" fill="#d02424"/><circle cx="114.1" cy="50.7" r="2.1" fill="#d02424"/><circle cx="12.0" cy="63.2" r="2.1" fill="#d02424"/><circle cx="32.4" cy="64.1" r="2.1" fill="#d02424"/><circle cx="73.1" cy="63.2" r="2.1" fill="#d02424"/><circle cx="93.7" cy="64.1" r="2.1" fill="#d02424"/><circle cx="3.4" cy="1.8" r="3.0" fill="#cfcfc8"/><circle cx="0.8" cy="14.0" r="3.0" fill="#cfcfc8"/><circle cx="3.4" cy="39.1" r="3.0" fill="#cfcfc8"/><circle cx="0.8" cy="51.5" r="3.0" fill="#cfcfc8"/><circle cx="3.4" cy="76.5" r="3.0" fill="#cfcfc8"/><circle cx="0.8" cy="88.3" r="3.0" fill="#cfcfc8"/><circle cx="64.5" cy="1.8" r="3.0" fill="#cfcfc8"/><circle cx="61.6" cy="14.0" r="3.0" fill="#cfcfc8"/><circle cx="64.5" cy="39.1" r="3.0" fill="#cfcfc8"/><circle cx="61.6" cy="51.5" r="3.0" fill="#cfcfc8"/><circle cx="64.5" cy="76.5" r="3.0" fill="#cfcfc8"/><circle cx="61.6" cy="88.3" r="3.0" fill="#cfcfc8"/><circle cx="125.5" cy="1.8" r="3.0" fill="#cfcfc8"/><circle cx="122.6" cy="14.0" r="3.0" fill="#cfcfc8"/><circle cx="125.5" cy="39.1" r="3.0" fill="#cfcfc8"/><circle cx="122.6" cy="51.5" r="3.0" fill="#cfcfc8"/><circle cx="125.5" cy="76.5" r="3.0" fill="#cfcfc8"/><circle cx="122.6" cy="88.3" r="3.0" fill="#cfcfc8"/><circle cx="20.5" cy="-10.8" r="3.0" fill="#cfcfc8"/><circle cx="24.0" cy="14.0" r="3.0" fill="#cfcfc8"/><circle cx="20.5" cy="26.7" r="3.0" fill="#cfcfc8"/><circle cx="24.0" cy="51.5" r="3.0" fill="#cfcfc8"/><circle cx="20.5" cy="64.1" r="3.0" fill="#cfcfc8"/><circle cx="24.0" cy="88.3" r="3.0" fill="#cfcfc8"/><circle cx="81.8" cy="-10.8" r="3.0" fill="#cfcfc8"/><circle cx="84.9" cy="14.0" r="3.0" fill="#cfcfc8"/><circle cx="81.8" cy="26.7" r="3.0" fill="#cfcfc8"/><circle cx="84.9" cy="51.5" r="3.0" fill="#cfcfc8"/><circle cx="81.8" cy="64.1" r="3.0" fill="#cfcfc8"/><circle cx="84.9" cy="88.3" r="3.0" fill="#cfcfc8"/><circle cx="41.1" cy="1.8" r="3.0" fill="#cfcfc8"/><circle cx="44.2" cy="26.7" r="3.0" fill="#cfcfc8"/><circle cx="41.1" cy="39.1" r="3.0" fill="#cfcfc8"/><circle cx="44.2" cy="64.1" r="3.0" fill="#cfcfc8"/><circle cx="41.1" cy="76.5" r="3.0" fill="#cfcfc8"/><circle cx="102.0" cy="1.8" r="3.0" fill="#cfcfc8"/><circle cx="105.5" cy="26.7" r="3.0" fill="#cfcfc8"/><circle cx="102.0" cy="39.1" r="3.0" fill="#cfcfc8"/><circle cx="105.5" cy="64.1" r="3.0" fill="#cfcfc8"/><circle cx="102.0" cy="76.5" r="3.0" fill="#cfcfc8"/><rect x="119" y="82" width="6" height="8" fill="#222"/><circle cx="122" cy="84" r="1.3" fill="#ccc"/><circle cx="122" cy="88" r="1.3" fill="#d22"/></svg>
<div class="a nw" style="left:30px;width:153px;top:385px;text-align:center;color:#fff;font-size:10.5px">Center + Adjust</div>
<div class="a" style="left:33px;top:413px;width:143px;height:120px;background:#a6d6fb;border:1px solid #fff;box-shadow:0 0 0 1px #b8c4d8"></div>
<svg class="a" style="left:44px;top:427px" width="126" height="92" viewBox="0 0 126 92"><rect width="126" height="92" fill="#000"/><path d="M4 3v8h7" stroke="#888" stroke-width="0.8" fill="none"/><g stroke="#a87a2a" stroke-width="1"><line x1="20.5" y1="27.5" x2="44.4" y2="27.5"/><line x1="80.9" y1="27.5" x2="103.9" y2="27.5"/><line x1="41.1" y1="39.2" x2="64.1" y2="39.2"/><line x1="101.0" y1="39.2" x2="124.0" y2="39.2"/><line x1="1.2" y1="51.8" x2="23.5" y2="51.8"/><line x1="61.2" y1="51.8" x2="84.2" y2="51.8"/><line x1="20.5" y1="64.4" x2="44.4" y2="64.4"/><line x1="80.9" y1="64.4" x2="103.9" y2="64.4"/><line x1="40.2" y1="3.2" x2="44.4" y2="27.5"/><line x1="24.3" y1="14.9" x2="20.5" y2="27.5"/><line x1="101.0" y1="3.2" x2="103.9" y2="27.5"/><line x1="84.2" y1="14.9" x2="80.9" y2="27.5"/><line x1="20.5" y1="27.5" x2="23.5" y2="51.8"/><line x1="44.4" y1="27.5" x2="41.1" y2="39.2"/><line x1="41.1" y1="39.2" x2="44.4" y2="64.4"/><line x1="80.9" y1="27.5" x2="84.2" y2="51.8"/><line x1="103.9" y1="27.5" x2="101.0" y2="39.2"/><line x1="101.0" y1="39.2" x2="103.9" y2="64.4"/><line x1="23.5" y1="51.8" x2="20.5" y2="64.4"/><line x1="84.2" y1="51.8" x2="80.9" y2="64.4"/><line x1="20.5" y1="64.4" x2="24.3" y2="88.3"/><line x1="44.4" y1="64.4" x2="41.1" y2="76.5"/><line x1="80.9" y1="64.4" x2="84.2" y2="88.3"/><line x1="103.9" y1="64.4" x2="101.0" y2="76.5"/></g><circle cx="32.7" cy="27.5" r="2.4" fill="#d02424"/><circle cx="52.8" cy="27.5" r="2.4" fill="#d02424"/><circle cx="92.6" cy="27.5" r="2.4" fill="#d02424"/><circle cx="112.7" cy="27.5" r="2.4" fill="#d02424"/><circle cx="12.1" cy="39.2" r="2.4" fill="#d02424"/><circle cx="32.7" cy="39.2" r="2.4" fill="#d02424"/><circle cx="72.9" cy="39.2" r="2.4" fill="#d02424"/><circle cx="92.6" cy="39.2" r="2.4" fill="#d02424"/><circle cx="112.7" cy="39.2" r="2.4" fill="#d02424"/><circle cx="12.1" cy="51.8" r="2.4" fill="#d02424"/><circle cx="32.7" cy="51.8" r="2.4" fill="#d02424"/><circle cx="52.8" cy="51.8" r="2.4" fill="#d02424"/><circle cx="72.9" cy="51.8" r="2.4" fill="#d02424"/><circle cx="92.6" cy="51.8" r="2.4" fill="#d02424"/><circle cx="112.7" cy="51.8" r="2.4" fill="#d02424"/><circle cx="12.1" cy="64.4" r="2.4" fill="#d02424"/><circle cx="32.7" cy="64.4" r="2.4" fill="#d02424"/><circle cx="72.9" cy="64.4" r="2.4" fill="#d02424"/><circle cx="92.6" cy="64.4" r="2.4" fill="#d02424"/><circle cx="112.7" cy="64.4" r="2.4" fill="#d02424"/><circle cx="40.2" cy="3.2" r="3.4" fill="#cfcfc8"/><circle cx="101.0" cy="3.2" r="3.4" fill="#cfcfc8"/><circle cx="24.3" cy="14.9" r="3.4" fill="#cfcfc8"/><circle cx="84.2" cy="14.9" r="3.4" fill="#cfcfc8"/><circle cx="20.5" cy="27.5" r="3.4" fill="#cfcfc8"/><circle cx="44.4" cy="27.5" r="3.4" fill="#cfcfc8"/><circle cx="80.9" cy="27.5" r="3.4" fill="#cfcfc8"/><circle cx="103.9" cy="27.5" r="3.4" fill="#cfcfc8"/><circle cx="3.8" cy="39.2" r="3.4" fill="#cfcfc8"/><circle cx="41.1" cy="39.2" r="3.4" fill="#cfcfc8"/><circle cx="64.1" cy="39.2" r="3.4" fill="#cfcfc8"/><circle cx="101.0" cy="39.2" r="3.4" fill="#cfcfc8"/><circle cx="124.0" cy="39.2" r="3.4" fill="#cfcfc8"/><circle cx="1.2" cy="51.8" r="3.4" fill="#cfcfc8"/><circle cx="23.5" cy="51.8" r="3.4" fill="#cfcfc8"/><circle cx="61.2" cy="51.8" r="3.4" fill="#cfcfc8"/><circle cx="84.2" cy="51.8" r="3.4" fill="#cfcfc8"/><circle cx="121.9" cy="51.8" r="3.4" fill="#cfcfc8"/><circle cx="20.5" cy="64.4" r="3.4" fill="#cfcfc8"/><circle cx="44.4" cy="64.4" r="3.4" fill="#cfcfc8"/><circle cx="80.9" cy="64.4" r="3.4" fill="#cfcfc8"/><circle cx="103.9" cy="64.4" r="3.4" fill="#cfcfc8"/><circle cx="41.1" cy="76.5" r="3.4" fill="#cfcfc8"/><circle cx="64.1" cy="76.5" r="3.4" fill="#cfcfc8"/><circle cx="101.0" cy="76.5" r="3.4" fill="#cfcfc8"/><circle cx="24.3" cy="88.3" r="3.4" fill="#cfcfc8"/><circle cx="84.2" cy="88.3" r="3.4" fill="#cfcfc8"/><rect x="119" y="83" width="6" height="8" fill="#222"/><circle cx="122" cy="85" r="1.3" fill="#ccc"/><circle cx="122" cy="89" r="1.3" fill="#d22"/></svg>
<div class="a nw" style="left:30px;width:153px;top:538px;text-align:center;color:#1a1a1a;font-size:10.5px">Coordination Spheres Directly</div>
<div class="a" style="left:33px;top:565px;width:143px;height:121px;background:#a6d6fb;border:1px solid #fff;box-shadow:0 0 0 1px #b8c4d8"></div>
<svg class="a" style="left:44px;top:580px" width="126" height="92" viewBox="0 0 126 92"><rect width="126" height="92" fill="#000"/><path d="M4 3v8h7" stroke="#888" stroke-width="0.8" fill="none"/><g stroke="#a87a2a" stroke-width="1"><line x1="20.5" y1="27.5" x2="44.4" y2="27.5"/><line x1="80.9" y1="27.5" x2="103.9" y2="27.5"/><line x1="41.1" y1="39.2" x2="64.1" y2="39.2"/><line x1="61.2" y1="51.8" x2="84.2" y2="51.8"/><line x1="20.5" y1="63.9" x2="44.4" y2="63.9"/><line x1="80.9" y1="63.9" x2="103.9" y2="63.9"/><line x1="20.5" y1="27.5" x2="23.5" y2="51.8"/><line x1="44.4" y1="27.5" x2="41.1" y2="39.2"/><line x1="41.1" y1="39.2" x2="44.4" y2="63.9"/><line x1="80.9" y1="27.5" x2="84.2" y2="51.8"/><line x1="103.9" y1="27.5" x2="101.0" y2="39.2"/><line x1="101.0" y1="39.2" x2="103.9" y2="63.9"/><line x1="23.5" y1="51.8" x2="20.5" y2="63.9"/><line x1="84.2" y1="51.8" x2="80.9" y2="63.9"/></g><circle cx="52.8" cy="27.5" r="2.4" fill="#d02424"/><circle cx="112.7" cy="27.5" r="2.4" fill="#d02424"/><circle cx="12.1" cy="39.2" r="2.4" fill="#d02424"/><circle cx="32.7" cy="39.2" r="2.4" fill="#d02424"/><circle cx="72.9" cy="39.2" r="2.4" fill="#d02424"/><circle cx="92.6" cy="39.2" r="2.4" fill="#d02424"/><circle cx="112.7" cy="39.2" r="2.4" fill="#d02424"/><circle cx="12.1" cy="51.8" r="2.4" fill="#d02424"/><circle cx="32.7" cy="51.8" r="2.4" fill="#d02424"/><circle cx="52.8" cy="51.8" r="2.4" fill="#d02424"/><circle cx="72.9" cy="51.8" r="2.4" fill="#d02424"/><circle cx="92.6" cy="51.8" r="2.4" fill="#d02424"/><circle cx="112.7" cy="51.8" r="2.4" fill="#d02424"/><circle cx="12.1" cy="63.9" r="2.4" fill="#d02424"/><circle cx="32.7" cy="63.9" r="2.4" fill="#d02424"/><circle cx="72.9" cy="63.9" r="2.4" fill="#d02424"/><circle cx="92.6" cy="63.9" r="2.4" fill="#d02424"/><circle cx="20.5" cy="27.5" r="3.4" fill="#cfcfc8"/><circle cx="44.4" cy="27.5" r="3.4" fill="#cfcfc8"/><circle cx="80.9" cy="27.5" r="3.4" fill="#cfcfc8"/><circle cx="103.9" cy="27.5" r="3.4" fill="#cfcfc8"/><circle cx="3.8" cy="39.2" r="3.4" fill="#cfcfc8"/><circle cx="41.1" cy="39.2" r="3.4" fill="#cfcfc8"/><circle cx="64.1" cy="39.2" r="3.4" fill="#cfcfc8"/><circle cx="101.0" cy="39.2" r="3.4" fill="#cfcfc8"/><circle cx="121.9" cy="39.2" r="3.4" fill="#cfcfc8"/><circle cx="23.5" cy="51.8" r="3.4" fill="#cfcfc8"/><circle cx="61.2" cy="51.8" r="3.4" fill="#cfcfc8"/><circle cx="84.2" cy="51.8" r="3.4" fill="#cfcfc8"/><circle cx="20.5" cy="63.9" r="3.4" fill="#cfcfc8"/><circle cx="44.4" cy="63.9" r="3.4" fill="#cfcfc8"/><circle cx="80.9" cy="63.9" r="3.4" fill="#cfcfc8"/><circle cx="103.9" cy="63.9" r="3.4" fill="#cfcfc8"/><rect x="119" y="83" width="6" height="8" fill="#222"/><circle cx="122" cy="85" r="1.3" fill="#ccc"/><circle cx="122" cy="89" r="1.3" fill="#d22"/></svg>
<div class="a" style="left:30px;top:690px;width:153px;height:9px;overflow:hidden"><div class="nw" style="position:absolute;left:0;width:153px;top:1px;text-align:center;color:#1a1a1a;font-size:10.5px">Coordination Spheres Directly</div></div>
<svg class="a" style="left:34px;top:702px" width="15" height="14" viewBox="0 0 15 14"><rect x="0.5" y="0.5" width="14" height="13" fill="#fff" stroke="#7a8ab0"/><rect x="1" y="1" width="13" height="2" fill="#6a8ad0"/><path d="M3 5h2v6h8M5 7h8M5 9h8" stroke="#6a6a30" fill="none"/></svg>
<div class="a nw" style="left:54px;top:704px;color:#fff;font-size:12px">Na...</div>
<svg class="a" style="left:90px;top:702px" width="15" height="14" viewBox="0 0 15 14"><rect x="0.5" y="0.5" width="14" height="13" fill="#f0f0f0" stroke="#7a8ab0"/><rect x="1" y="1" width="13" height="2" fill="#6a8ad0"/><circle cx="8" cy="8" r="4.5" fill="#fff" stroke="#888"/><path d="M1 8l3 3 5-7" stroke="#3a3" stroke-width="2" fill="none"/></svg>
<div class="a nw" style="left:109px;top:704px;color:#fff;font-size:12px">Rec...</div>
<div class="a" style="left:143px;top:699px;width:56px;height:20px;background:#f8f8f8;border-radius:0 0 3px 3px"></div>
<svg class="a" style="left:147px;top:702px" width="15" height="14" viewBox="0 0 15 14"><rect x="0.5" y="0.5" width="14" height="13" fill="#e8eef8" stroke="#5a7ab0"/><rect x="1" y="1" width="13" height="2" fill="#6a8ad0"/><path d="M10 11a3.5 3.5 0 1 0-5-4" fill="none" stroke="#3a6ad0" stroke-width="1.6"/><path d="M3 5l2 3 2-3z" fill="#3a6ad0"/></svg>
<div class="a nw" style="left:166px;top:704px;color:#111;font-size:12px">Un...</div>
<!-- CENTER -->
<div id="center" class="a"></div>
<div id="info" class="a"></div>
<div class="a" style="left:206px;top:84px;width:22px;height:18px;background:#f4f4f4;border-right:1px solid #e0e0e0"></div>
<svg class="a" style="left:211px;top:87px" width="11" height="10" viewBox="0 0 11 10"><path d="M1 1l9 8M10 1L1 9" stroke="#6e6e6e" stroke-width="2.2"/></svg>
<div class="a nw" style="left:433px;top:86px;font-size:12px;color:#000">s currently selected.)</div>
<svg class="a" style="left:1413px;top:84px" width="14" height="18" viewBox="0 0 14 18"><path d="M3 6l4-4 4 4" fill="none" stroke="#111" stroke-width="1.6"/><path d="M2 12h10l-5 5z" fill="#111"/></svg>
<div class="a" style="left:204px;top:106px;width:779px;height:30px;background:#f0f0f0"></div>
<div class="a" style="left:204px;top:108px;width:779px;height:1px;background:#9c9c9c"></div>
<div class="a" style="left:204px;top:133px;width:779px;height:3px;background:#a4d0f4"></div>
<svg class="a" style="left:211px;top:118px" width="11" height="9" viewBox="0 0 11 9"><rect x="0" y="0" width="4" height="3" fill="#777"/><rect x="6" y="0" width="4" height="3" fill="#777"/><rect x="0" y="5" width="4" height="3" fill="#777"/><rect x="6" y="5" width="4" height="3" fill="#777"/></svg>
<svg class="a" style="left:967px;top:118px" width="12" height="9" viewBox="0 0 12 9"><path d="M1 1l4 3.5-4 3.5M6 1l4 3.5-4 3.5" fill="none" stroke="#808080" stroke-width="2"/></svg>
<div class="a" style="left:204px;top:136px;width:2px;height:560px;background:#dfe4f0"></div>
<div class="a" style="left:983px;top:106px;width:5px;height:616px;background:#f0f0f0"></div>
<div class="a" style="left:204px;top:694px;width:779px;height:27px;background:#f4f4f4;border-top:1px solid #d0d0d0"></div>
<div class="a" style="left:206px;top:697px;width:15px;height:22px;background:#f0f0f0;border:1px solid #d4d4d4"></div>
<svg class="a" style="left:208px;top:700px" width="11" height="17" viewBox="0 0 11 17"><path d="M1 7l4.5-5 4.5 5z" fill="#8a8a8a"/><path d="M1 10l4.5 5 4.5-5z" fill="#8a8a8a"/></svg>
<div class="a" style="left:224px;top:698px;width:117px;height:21px;background:linear-gradient(#bcd8f2,#a6c8ea);border:1px solid #fff;box-shadow:0 0 0 1px #d8d8d8"></div>
<div class="a nw" style="left:228px;top:703px;font-size:11px;color:#1c1c1c;letter-spacing:-0.05px">2040764 :: Picture 1</div>
<div class="a" style="left:343px;top:698px;width:117px;height:21px;background:linear-gradient(#b8e2cc,#9ccdb4);border:1px solid #fff;box-shadow:0 0 0 1px #d8d8d8"></div>
<div class="a nw" style="left:347px;top:703px;font-size:11px;color:#1c1c1c;letter-spacing:-0.05px">2040765 :: Picture 1</div>
<div class="a" style="left:462px;top:698px;width:117px;height:21px;background:linear-gradient(#f6e49a,#e8cc6a);border:1px solid #fff;box-shadow:0 0 0 1px #d8d8d8"></div>
<div class="a nw" style="left:466px;top:703px;font-size:11px;color:#1c1c1c;letter-spacing:-0.05px">452452 :: Picture 1</div>
<div class="a" style="left:581px;top:698px;width:117px;height:21px;background:linear-gradient(#dcd0f6,#c4b0ea);border:1px solid #fff;box-shadow:0 0 0 1px #d8d8d8"></div>
<div class="a nw" style="left:585px;top:703px;font-size:11px;color:#1c1c1c;letter-spacing:-0.05px">452453 :: Picture 1</div>
<div class="a" style="left:700px;top:698px;width:117px;height:21px;background:linear-gradient(#bcd8f2,#a6c8ea);border:1px solid #fff;box-shadow:0 0 0 1px #d8d8d8"></div>
<div class="a nw" style="left:704px;top:703px;font-size:11px;color:#1c1c1c;letter-spacing:-0.05px">455496 :: Picture 1</div>
<div class="a" style="left:819px;top:698px;width:118px;height:21px;background:linear-gradient(#b8e2cc,#9ccdb4);border:1px solid #fff;box-shadow:0 0 0 1px #d8d8d8"></div>
<div class="a nw" style="left:823px;top:703px;font-size:11px;color:#1c1c1c;letter-spacing:-0.05px">541661 :: Picture 1</div>
<div class="a" style="left:938px;top:698px;width:4px;height:21px;background:linear-gradient(#f6e49a,#e8cc6a);border:1px solid #fff;box-shadow:0 0 0 1px #d8d8d8"></div>
<div class="a" style="left:942px;top:696px;width:42px;height:24px;background:#f4f4f4"></div>
<svg class="a" style="left:950px;top:702px" width="30" height="12" viewBox="0 0 30 12"><path d="M8 1v10L3 6z" fill="#6a6a6a"/><path d="M21 1v10l5-5z" fill="#6a6a6a"/></svg>
<div id="view" class="a"><svg class="a" style="left:0;top:0" width="777" height="558" viewBox="206 136 777 558">
<defs><clipPath id="cg"><circle cx="0" cy="0" r="19.8"/></clipPath><clipPath id="cr"><circle cx="0" cy="0" r="12.3"/></clipPath></defs>
<rect x="206" y="136" width="777" height="558" fill="#000"/>
<g stroke="#b4581c" stroke-width="1" fill="none"><path d="M218.5 300.5H982M218.5 530.5H982M218.5 300.5V530.5M971.5 300.5V530.5"/></g>
<g transform="translate(281,304.7)"><circle r="13.3" fill="#fff"/><circle r="12.3" fill="#f00"/><circle cx="9" cy="-8.5" r="4.4" fill="#fff" clip-path="url(#cr)"/></g>
<g transform="translate(406,300)"><circle r="13.3" fill="#fff"/><circle r="12.3" fill="#f00"/><circle cx="9" cy="-8.5" r="4.4" fill="#fff" clip-path="url(#cr)"/></g>
<g transform="translate(532,304.7)"><circle r="13.3" fill="#fff"/><circle r="12.3" fill="#f00"/><circle cx="9" cy="-8.5" r="4.4" fill="#fff" clip-path="url(#cr)"/></g>
<g transform="translate(781.8,300)"><circle r="13.3" fill="#fff"/><circle r="12.3" fill="#f00"/><circle cx="9" cy="-8.5" r="4.4" fill="#fff" clip-path="url(#cr)"/></g>
<g transform="translate(907,304.7)"><circle r="13.3" fill="#fff"/><circle r="12.3" fill="#f00"/><circle cx="9" cy="-8.5" r="4.4" fill="#fff" clip-path="url(#cr)"/></g>
<g transform="translate(281,380.6)"><circle r="13.3" fill="#fff"/><circle r="12.3" fill="#f00"/><circle cx="9" cy="-8.5" r="4.4" fill="#fff" clip-path="url(#cr)"/></g>
<g transform="translate(405,372)"><circle r="13.3" fill="#fff"/><circle r="12.3" fill="#f00"/><circle cx="9" cy="-8.5" r="4.4" fill="#fff" clip-path="url(#cr)"/></g>
<g transform="translate(532,377)"><circle r="13.3" fill="#fff"/><circle r="12.3" fill="#f00"/><circle cx="9" cy="-8.5" r="4.4" fill="#fff" clip-path="url(#cr)"/></g>
<g transform="translate(656,382)"><circle r="13.3" fill="#fff"/><circle r="12.3" fill="#f00"/><circle cx="9" cy="-8.5" r="4.4" fill="#fff" clip-path="url(#cr)"/></g>
<g transform="translate(782,371.5)"><circle r="13.3" fill="#fff"/><circle r="12.3" fill="#f00"/><circle cx="9" cy="-8.5" r="4.4" fill="#fff" clip-path="url(#cr)"/></g>
<g transform="translate(907,376.6)"><circle r="13.3" fill="#fff"/><circle r="12.3" fill="#f00"/><circle cx="9" cy="-8.5" r="4.4" fill="#fff" clip-path="url(#cr)"/></g>
<g transform="translate(280.4,452)"><circle r="13.3" fill="#fff"/><circle r="12.3" fill="#f00"/><circle cx="9" cy="-8.5" r="4.4" fill="#fff" clip-path="url(#cr)"/></g>
<g transform="translate(406,457)"><circle r="13.3" fill="#fff"/><circle r="12.3" fill="#f00"/><circle cx="9" cy="-8.5" r="4.4" fill="#fff" clip-path="url(#cr)"/></g>
<g transform="translate(531.6,447)"><circle r="13.3" fill="#fff"/><circle r="12.3" fill="#f00"/><circle cx="9" cy="-8.5" r="4.4" fill="#fff" clip-path="url(#cr)"/></g>
<g transform="translate(655.7,452)"><circle r="13.3" fill="#fff"/><circle r="12.3" fill="#f00"/><circle cx="9" cy="-8.5" r="4.4" fill="#fff" clip-path="url(#cr)"/></g>
<g transform="translate(782,457)"><circle r="13.3" fill="#fff"/><circle r="12.3" fill="#f00"/><circle cx="9" cy="-8.5" r="4.4" fill="#fff" clip-path="url(#cr)"/></g>
<g transform="translate(907,447)"><circle r="13.3" fill="#fff"/><circle r="12.3" fill="#f00"/><circle cx="9" cy="-8.5" r="4.4" fill="#fff" clip-path="url(#cr)"/></g>
<g transform="translate(280.4,523.7)"><circle r="13.3" fill="#fff"/><circle r="12.3" fill="#f00"/><circle cx="9" cy="-8.5" r="4.4" fill="#fff" clip-path="url(#cr)"/></g>
<g transform="translate(406,529.5)"><circle r="13.3" fill="#fff"/><circle r="12.3" fill="#f00"/><circle cx="9" cy="-8.5" r="4.4" fill="#fff" clip-path="url(#cr)"/></g>
<g transform="translate(655.7,523.7)"><circle r="13.3" fill="#fff"/><circle r="12.3" fill="#f00"/><circle cx="9" cy="-8.5" r="4.4" fill="#fff" clip-path="url(#cr)"/></g>
<g transform="translate(782,529.5)"><circle r="13.3" fill="#fff"/><circle r="12.3" fill="#f00"/><circle cx="9" cy="-8.5" r="4.4" fill="#fff" clip-path="url(#cr)"/></g>
<g stroke="#ffa408" stroke-width="5" stroke-linecap="butt">
<line x1="459" y1="147.0" x2="603" y2="147.0"/>
<line x1="834" y1="147.0" x2="978" y2="147.0"/>
<line x1="459" y1="376.79999999999995" x2="603" y2="376.79999999999995"/>
<line x1="834" y1="376.79999999999995" x2="978" y2="376.79999999999995"/>
<line x1="459" y1="606.5999999999999" x2="603" y2="606.5999999999999"/>
<line x1="834" y1="606.5999999999999" x2="978" y2="606.5999999999999"/>
<line x1="209.5" y1="223.6" x2="354.5" y2="223.6"/>
<line x1="584.5" y1="223.6" x2="729.5" y2="223.6"/>
<line x1="209.5" y1="453.4" x2="354.5" y2="453.4"/>
<line x1="584.5" y1="453.4" x2="729.5" y2="453.4"/>
<line x1="209.5" y1="683.1999999999999" x2="354.5" y2="683.1999999999999"/>
<line x1="584.5" y1="683.1999999999999" x2="729.5" y2="683.1999999999999"/>
<line x1="334" y1="300.2" x2="478.8" y2="300.2"/>
<line x1="709" y1="300.2" x2="853.8" y2="300.2"/>
<line x1="334" y1="530.0" x2="478.8" y2="530.0"/>
<line x1="709" y1="530.0" x2="853.8" y2="530.0"/>
<line x1="209.5" y1="70.0" x2="228" y2="147.0"/>
<line x1="228" y1="147.0" x2="209.5" y2="223.6"/>
<line x1="209.5" y1="223.6" x2="228" y2="376.79999999999995"/>
<line x1="228" y1="376.79999999999995" x2="209.5" y2="453.4"/>
<line x1="209.5" y1="453.4" x2="228" y2="606.5999999999999"/>
<line x1="209.5" y1="683.1999999999999" x2="228" y2="837.1999999999999"/>
<line x1="584.5" y1="70.0" x2="603" y2="147.0"/>
<line x1="603" y1="147.0" x2="584.5" y2="223.6"/>
<line x1="584.5" y1="223.6" x2="603" y2="376.79999999999995"/>
<line x1="603" y1="376.79999999999995" x2="584.5" y2="453.4"/>
<line x1="584.5" y1="453.4" x2="603" y2="606.5999999999999"/>
<line x1="603" y1="606.5999999999999" x2="584.5" y2="683.1999999999999"/>
<line x1="584.5" y1="683.1999999999999" x2="603" y2="837.1999999999999"/>
<line x1="959.5" y1="70.0" x2="978" y2="147.0"/>
<line x1="959.5" y1="223.6" x2="978" y2="376.79999999999995"/>
<line x1="978" y1="376.79999999999995" x2="959.5" y2="453.4"/>
<line x1="959.5" y1="453.4" x2="978" y2="606.5999999999999"/>
<line x1="978" y1="606.5999999999999" x2="959.5" y2="683.1999999999999"/>
<line x1="959.5" y1="683.1999999999999" x2="978" y2="837.1999999999999"/>
<line x1="334" y1="70" x2="354.5" y2="223.6"/>
<line x1="354.5" y1="223.6" x2="334" y2="300.2"/>
<line x1="334" y1="300.2" x2="354.5" y2="453.4"/>
<line x1="354.5" y1="453.4" x2="334" y2="530.0"/>
<line x1="334" y1="530.0" x2="354.5" y2="683.1999999999999"/>
<line x1="354.5" y1="683.1999999999999" x2="334" y2="760.1999999999999"/>
<line x1="709" y1="70" x2="729.5" y2="223.6"/>
<line x1="729.5" y1="223.6" x2="709" y2="300.2"/>
<line x1="709" y1="300.2" x2="729.5" y2="453.4"/>
<line x1="729.5" y1="453.4" x2="709" y2="530.0"/>
<line x1="709" y1="530.0" x2="729.5" y2="683.1999999999999"/>
<line x1="729.5" y1="683.1999999999999" x2="709" y2="760.1999999999999"/>
<line x1="478.8" y1="70" x2="459" y2="147.0"/>
<line x1="459" y1="147.0" x2="478.8" y2="300.2"/>
<line x1="478.8" y1="300.2" x2="459" y2="376.79999999999995"/>
<line x1="459" y1="376.79999999999995" x2="478.8" y2="530.0"/>
<line x1="478.8" y1="530.0" x2="459" y2="606.5999999999999"/>
<line x1="459" y1="606.5999999999999" x2="478.8" y2="759.5999999999999"/>
<line x1="853.8" y1="70" x2="834" y2="147.0"/>
<line x1="834" y1="147.0" x2="853.8" y2="300.2"/>
<line x1="853.8" y1="300.2" x2="834" y2="376.79999999999995"/>
<line x1="834" y1="376.79999999999995" x2="853.8" y2="530.0"/>
<line x1="853.8" y1="530.0" x2="834" y2="606.5999999999999"/>
<line x1="834" y1="606.5999999999999" x2="853.8" y2="759.5999999999999"/>
</g>
<g transform="translate(228,147.0)"><circle r="20.8" fill="#fff"/><circle r="19.8" fill="#c6c6ca"/><circle cx="13.5" cy="-12" r="6.8" fill="#fff" clip-path="url(#cg)"/></g>
<g transform="translate(209.5,223.6)"><circle r="20.8" fill="#fff"/><circle r="19.8" fill="#c6c6ca"/><circle cx="13.5" cy="-12" r="6.8" fill="#fff" clip-path="url(#cg)"/></g>
<g transform="translate(228,376.79999999999995)"><circle r="20.8" fill="#fff"/><circle r="19.8" fill="#c6c6ca"/><circle cx="13.5" cy="-12" r="6.8" fill="#fff" clip-path="url(#cg)"/></g>
<g transform="translate(209.5,453.4)"><circle r="20.8" fill="#fff"/><circle r="19.8" fill="#c6c6ca"/><circle cx="13.5" cy="-12" r="6.8" fill="#fff" clip-path="url(#cg)"/></g>
<g transform="translate(228,606.5999999999999)"><circle r="20.8" fill="#fff"/><circle r="19.8" fill="#c6c6ca"/><circle cx="13.5" cy="-12" r="6.8" fill="#fff" clip-path="url(#cg)"/></g>
<g transform="translate(209.5,683.1999999999999)"><circle r="20.8" fill="#fff"/><circle r="19.8" fill="#c6c6ca"/><circle cx="13.5" cy="-12" r="6.8" fill="#fff" clip-path="url(#cg)"/></g>
<g transform="translate(603,147.0)"><circle r="20.8" fill="#fff"/><circle r="19.8" fill="#c6c6ca"/><circle cx="13.5" cy="-12" r="6.8" fill="#fff" clip-path="url(#cg)"/></g>
<g transform="translate(584.5,223.6)"><circle r="20.8" fill="#fff"/><circle r="19.8" fill="#c6c6ca"/><circle cx="13.5" cy="-12" r="6.8" fill="#fff" clip-path="url(#cg)"/></g>
<g transform="translate(603,376.79999999999995)"><circle r="20.8" fill="#fff"/><circle r="19.8" fill="#c6c6ca"/><circle cx="13.5" cy="-12" r="6.8" fill="#fff" clip-path="url(#cg)"/></g>
<g transform="translate(584.5,453.4)"><circle r="20.8" fill="#fff"/><circle r="19.8" fill="#c6c6ca"/><circle cx="13.5" cy="-12" r="6.8" fill="#fff" clip-path="url(#cg)"/></g>
<g transform="translate(603,606.5999999999999)"><circle r="20.8" fill="#fff"/><circle r="19.8" fill="#c6c6ca"/><circle cx="13.5" cy="-12" r="6.8" fill="#fff" clip-path="url(#cg)"/></g>
<g transform="translate(584.5,683.1999999999999)"><circle r="20.8" fill="#fff"/><circle r="19.8" fill="#c6c6ca"/><circle cx="13.5" cy="-12" r="6.8" fill="#fff" clip-path="url(#cg)"/></g>
<g transform="translate(978,147.0)"><circle r="20.8" fill="#fff"/><circle r="19.8" fill="#c6c6ca"/><circle cx="13.5" cy="-12" r="6.8" fill="#fff" clip-path="url(#cg)"/></g>
<g transform="translate(959.5,223.6)"><circle r="20.8" fill="#fff"/><circle r="19.8" fill="#c6c6ca"/><circle cx="13.5" cy="-12" r="6.8" fill="#fff" clip-path="url(#cg)"/></g>
<g transform="translate(978,376.79999999999995)"><circle r="20.8" fill="#fff"/><circle r="19.8" fill="#c6c6ca"/><circle cx="13.5" cy="-12" r="6.8" fill="#fff" clip-path="url(#cg)"/></g>
<g transform="translate(959.5,453.4)"><circle r="20.8" fill="#fff"/><circle r="19.8" fill="#c6c6ca"/><circle cx="13.5" cy="-12" r="6.8" fill="#fff" clip-path="url(#cg)"/></g>
<g transform="translate(978,606.5999999999999)"><circle r="20.8" fill="#fff"/><circle r="19.8" fill="#c6c6ca"/><circle cx="13.5" cy="-12" r="6.8" fill="#fff" clip-path="url(#cg)"/></g>
<g transform="translate(959.5,683.1999999999999)"><circle r="20.8" fill="#fff"/><circle r="19.8" fill="#c6c6ca"/><circle cx="13.5" cy="-12" r="6.8" fill="#fff" clip-path="url(#cg)"/></g>
<g transform="translate(354.5,223.6)"><circle r="20.8" fill="#fff"/><circle r="19.8" fill="#c6c6ca"/><circle cx="13.5" cy="-12" r="6.8" fill="#fff" clip-path="url(#cg)"/></g>
<g transform="translate(334,300.2)"><circle r="20.8" fill="#fff"/><circle r="19.8" fill="#c6c6ca"/><circle cx="13.5" cy="-12" r="6.8" fill="#fff" clip-path="url(#cg)"/></g>
<g transform="translate(354.5,453.4)"><circle r="20.8" fill="#fff"/><circle r="19.8" fill="#c6c6ca"/><circle cx="13.5" cy="-12" r="6.8" fill="#fff" clip-path="url(#cg)"/></g>
<g transform="translate(334,530.0)"><circle r="20.8" fill="#fff"/><circle r="19.8" fill="#c6c6ca"/><circle cx="13.5" cy="-12" r="6.8" fill="#fff" clip-path="url(#cg)"/></g>
<g transform="translate(354.5,683.1999999999999)"><circle r="20.8" fill="#fff"/><circle r="19.8" fill="#c6c6ca"/><circle cx="13.5" cy="-12" r="6.8" fill="#fff" clip-path="url(#cg)"/></g>
<g transform="translate(729.5,223.6)"><circle r="20.8" fill="#fff"/><circle r="19.8" fill="#c6c6ca"/><circle cx="13.5" cy="-12" r="6.8" fill="#fff" clip-path="url(#cg)"/></g>
<g transform="translate(709,300.2)"><circle r="20.8" fill="#fff"/><circle r="19.8" fill="#c6c6ca"/><circle cx="13.5" cy="-12" r="6.8" fill="#fff" clip-path="url(#cg)"/></g>
<g transform="translate(729.5,453.4)"><circle r="20.8" fill="#fff"/><circle r="19.8" fill="#c6c6ca"/><circle cx="13.5" cy="-12" r="6.8" fill="#fff" clip-path="url(#cg)"/></g>
<g transform="translate(709,530.0)"><circle r="20.8" fill="#fff"/><circle r="19.8" fill="#c6c6ca"/><circle cx="13.5" cy="-12" r="6.8" fill="#fff" clip-path="url(#cg)"/></g>
<g transform="translate(729.5,683.1999999999999)"><circle r="20.8" fill="#fff"/><circle r="19.8" fill="#c6c6ca"/><circle cx="13.5" cy="-12" r="6.8" fill="#fff" clip-path="url(#cg)"/></g>
<g transform="translate(459,147.0)"><circle r="20.8" fill="#fff"/><circle r="19.8" fill="#c6c6ca"/><circle cx="13.5" cy="-12" r="6.8" fill="#fff" clip-path="url(#cg)"/></g>
<g transform="translate(478.8,300.2)"><circle r="20.8" fill="#fff"/><circle r="19.8" fill="#c6c6ca"/><circle cx="13.5" cy="-12" r="6.8" fill="#fff" clip-path="url(#cg)"/></g>
<g transform="translate(459,376.79999999999995)"><circle r="20.8" fill="#fff"/><circle r="19.8" fill="#c6c6ca"/><circle cx="13.5" cy="-12" r="6.8" fill="#fff" clip-path="url(#cg)"/></g>
<g transform="translate(478.8,530.0)"><circle r="20.8" fill="#fff"/><circle r="19.8" fill="#c6c6ca"/><circle cx="13.5" cy="-12" r="6.8" fill="#fff" clip-path="url(#cg)"/></g>
<g transform="translate(459,606.5999999999999)"><circle r="20.8" fill="#fff"/><circle r="19.8" fill="#c6c6ca"/><circle cx="13.5" cy="-12" r="6.8" fill="#fff" clip-path="url(#cg)"/></g>
<g transform="translate(834,147.0)"><circle r="20.8" fill="#fff"/><circle r="19.8" fill="#c6c6ca"/><circle cx="13.5" cy="-12" r="6.8" fill="#fff" clip-path="url(#cg)"/></g>
<g transform="translate(853.8,300.2)"><circle r="20.8" fill="#fff"/><circle r="19.8" fill="#c6c6ca"/><circle cx="13.5" cy="-12" r="6.8" fill="#fff" clip-path="url(#cg)"/></g>
<g transform="translate(834,376.79999999999995)"><circle r="20.8" fill="#fff"/><circle r="19.8" fill="#c6c6ca"/><circle cx="13.5" cy="-12" r="6.8" fill="#fff" clip-path="url(#cg)"/></g>
<g transform="translate(853.8,530.0)"><circle r="20.8" fill="#fff"/><circle r="19.8" fill="#c6c6ca"/><circle cx="13.5" cy="-12" r="6.8" fill="#fff" clip-path="url(#cg)"/></g>
<g transform="translate(834,606.5999999999999)"><circle r="20.8" fill="#fff"/><circle r="19.8" fill="#c6c6ca"/><circle cx="13.5" cy="-12" r="6.8" fill="#fff" clip-path="url(#cg)"/></g>
<g><line x1="214.9" y1="431.0" x2="212.0" y2="443.2" stroke="#000" stroke-width="7" stroke-linecap="round"/><line x1="214.9" y1="431.0" x2="212.0" y2="443.2" stroke="#ffa408" stroke-width="5" stroke-linecap="round"/><line x1="589.9" y1="431.0" x2="587.0" y2="443.2" stroke="#000" stroke-width="7" stroke-linecap="round"/><line x1="589.9" y1="431.0" x2="587.0" y2="443.2" stroke="#ffa408" stroke-width="5" stroke-linecap="round"/><line x1="348.6" y1="245.8" x2="351.8" y2="233.7" stroke="#000" stroke-width="7" stroke-linecap="round"/><line x1="348.6" y1="245.8" x2="351.8" y2="233.7" stroke="#ffa408" stroke-width="5" stroke-linecap="round"/><line x1="348.6" y1="475.6" x2="351.8" y2="463.5" stroke="#000" stroke-width="7" stroke-linecap="round"/><line x1="348.6" y1="475.6" x2="351.8" y2="463.5" stroke="#ffa408" stroke-width="5" stroke-linecap="round"/><line x1="723.6" y1="245.8" x2="726.8" y2="233.7" stroke="#000" stroke-width="7" stroke-linecap="round"/><line x1="723.6" y1="245.8" x2="726.8" y2="233.7" stroke="#ffa408" stroke-width="5" stroke-linecap="round"/><line x1="723.6" y1="475.6" x2="726.8" y2="463.5" stroke="#000" stroke-width="7" stroke-linecap="round"/><line x1="723.6" y1="475.6" x2="726.8" y2="463.5" stroke="#ffa408" stroke-width="5" stroke-linecap="round"/><line x1="464.8" y1="354.5" x2="461.6" y2="366.6" stroke="#000" stroke-width="7" stroke-linecap="round"/><line x1="464.8" y1="354.5" x2="461.6" y2="366.6" stroke="#ffa408" stroke-width="5" stroke-linecap="round"/><line x1="464.8" y1="584.3" x2="461.6" y2="596.4" stroke="#000" stroke-width="7" stroke-linecap="round"/><line x1="464.8" y1="584.3" x2="461.6" y2="596.4" stroke="#ffa408" stroke-width="5" stroke-linecap="round"/><line x1="839.8" y1="354.5" x2="836.6" y2="366.6" stroke="#000" stroke-width="7" stroke-linecap="round"/><line x1="839.8" y1="354.5" x2="836.6" y2="366.6" stroke="#ffa408" stroke-width="5" stroke-linecap="round"/><line x1="839.8" y1="584.3" x2="836.6" y2="596.4" stroke="#000" stroke-width="7" stroke-linecap="round"/><line x1="839.8" y1="584.3" x2="836.6" y2="596.4" stroke="#ffa408" stroke-width="5" stroke-linecap="round"/></g>
<rect x="935.5" y="648.5" width="46" height="44" fill="#000" stroke="#fff"/>
<circle cx="945" cy="659" r="9" fill="#fff"/><circle cx="945" cy="659" r="8.2" fill="#c6c6ca"/>
<circle cx="945" cy="683" r="9" fill="#fff"/><circle cx="945" cy="683" r="8.2" fill="#f00"/>
<text x="955" y="664" fill="#fff" font-family="Liberation Sans" font-size="13">V+0</text>
<text x="955" y="688" fill="#fff" font-family="Liberation Sans" font-size="13">O+0</text>
</svg></div>
<div class="a" style="left:988px;top:107px;width:441px;height:387px;background:#fff;border:1px solid #9c9c9c"></div>
<div class="a" style="left:989px;top:108px;width:439px;height:25px;background:#f0f0f0;border-bottom:1px solid #a0a0a0"></div>
<div class="a nw" style="left:996px;top:116px;font-size:12px;color:#000">Data sheet</div>
<svg class="a" style="left:1056px;top:123px" width="7" height="4" viewBox="0 0 7 4"><path d="M0 0h7L3.5 4z" fill="#bbb"/></svg>
<svg class="a" style="left:1412px;top:116px" width="11" height="10" viewBox="0 0 11 10"><path d="M1 1l9 8M10 1L1 9" stroke="#707070" stroke-width="2.2"/></svg>
<div class="a" style="left:1413px;top:134px;width:15px;height:359px;background:linear-gradient(90deg,#e8e8e8,#f6f6f6 50%,#ececec)"></div>
<svg class="a" style="left:1416px;top:140px" width="9" height="6" viewBox="0 0 9 6"><path d="M0 5l4.5-4.5L9 5z" fill="#333"/></svg>
<div class="a" style="left:1413px;top:152px;width:14px;height:309px;background:linear-gradient(90deg,#f2f2f2,#dadada 50%,#c6c6c6);border:1px solid #a6a6a6;border-radius:2px"></div>
<div class="a" style="left:1416px;top:303px;width:8px;height:7px;border-top:1px solid #555;border-bottom:1px solid #555"><div style="margin-top:2px;border-top:1px solid #555"></div></div>
<svg class="a" style="left:1416px;top:481px" width="9" height="6" viewBox="0 0 9 6"><path d="M0 1h9L4.5 5.5z" fill="#333"/></svg>
<div class="a" style="left:1000px;top:150px;width:401px;height:15px;background:#a8d6fb"></div><div class="a nw" style="left:1000px;width:401px;top:151px;text-align:center;font-weight:bold;font-size:12px;color:#111;line-height:14px">General</div>
<div class="a" style="left:1000px;top:171px;width:84px;height:15px;background:#a8d6fb"></div><div class="a nw" style="left:1003px;top:172px;font-weight:bold;font-size:12px;color:#111;line-height:15px">Origin</div>
<div class="a nw" style="left:1091px;top:172px;font-size:12px;color:#111;line-height:15px">542477</div>
<div class="a" style="left:1000px;top:187px;width:84px;height:15px;background:#a8d6fb"></div><div class="a nw" style="left:1003px;top:188px;font-weight:bold;font-size:12px;color:#111;line-height:15px">Formula</div>
<div class="a nw" style="left:1091px;top:188px;font-size:12px;color:#111;line-height:15px">V2O3</div>
<div class="a" style="left:1000px;top:219px;width:401px;height:15px;background:#a8d6fb"></div><div class="a nw" style="left:1000px;width:401px;top:220px;text-align:center;font-weight:bold;font-size:12px;color:#111;line-height:14px">Bibliographic data</div>
<div class="a" style="left:1000px;top:240px;width:84px;height:15px;background:#a8d6fb"></div><div class="a nw" style="left:1003px;top:241px;font-weight:bold;font-size:12px;color:#111;line-height:15px">Author(s)</div>
<div class="a nw" style="left:1091px;top:241px;font-size:12px;color:#111;line-height:15px"><span style="display:inline-block;transform-origin:0 0;transform:scaleX(0.925)">Chen S., Hahn J.E., Rice C.E., Robinson W.R.</span></div>
<div class="a" style="left:1000px;top:256px;width:84px;height:30px;background:#a8d6fb"></div><div class="a nw" style="left:1003px;top:257px;font-weight:bold;font-size:12px;color:#111;line-height:15px">Publication<br>title</div>
<div class="a nw" style="left:1091px;top:257px;font-size:12px;color:#111;line-height:15px">The Effects of Titanium or Chromium Doping on the<br>Crystal Structure of V2O3</div>
<div class="a" style="left:1000px;top:287px;width:84px;height:15px;background:#a8d6fb"></div><div class="a nw" style="left:1003px;top:288px;font-weight:bold;font-size:12px;color:#111;line-height:15px">Citation</div>
<div class="a nw" style="left:1091px;top:288px;font-size:12px;color:#111;line-height:15px">JSSCBI,44,192-200 (1982)</div>
<div class="a" style="left:1000px;top:319px;width:401px;height:15px;background:#a8d6fb"></div><div class="a nw" style="left:1000px;width:401px;top:320px;text-align:center;font-weight:bold;font-size:12px;color:#111;line-height:14px">Phase data</div>
<div class="a" style="left:1000px;top:340px;width:84px;height:15px;background:#a8d6fb"></div><div class="a nw" style="left:1003px;top:341px;font-weight:bold;font-size:12px;color:#111;line-height:15px">Space-group</div>
<div class="a nw" style="left:1091px;top:341px;font-size:12px;color:#111;line-height:15px">R -3 c (167) - trigonal</div>
<div class="a" style="left:1000px;top:356px;width:84px;height:48px;background:#a8d6fb"></div><div class="a nw" style="left:1003px;top:373px;font-weight:bold;font-size:12px;color:#111;line-height:15px">Cell</div>
<div class="a nw" style="left:1091px;top:357px;font-size:12px;color:#111;line-height:15px">a=4.9532(2) &#197; c=14.006(2) &#197;<br>c/a=2.8277</div>
<div class="a nw" style="left:1091px;top:388px;font-size:12px;color:#111;line-height:17px">V=297.59(5) &#197;<sup style="font-size:8px;vertical-align:5px">3</sup></div>
<div class="a" style="left:1000px;top:422px;width:262px;height:15px;background:#a8d6fb"></div><div class="a nw" style="left:1000px;width:262px;top:423px;text-align:center;font-weight:bold;font-size:12px;color:#111;line-height:14px">Atomic parameters</div>
<div class="a" style="left:1000px;top:443px;width:35px;height:15px;background:#a8d6fb"></div><div class="a nw" style="left:1000px;width:35px;top:444px;text-align:center;font-weight:bold;font-size:12px;color:#111;line-height:14px">Atom</div>
<div class="a" style="left:1036px;top:443px;width:23px;height:15px;background:#a8d6fb"></div><div class="a nw" style="left:1036px;width:23px;top:444px;text-align:center;font-weight:bold;font-size:12px;color:#111;line-height:14px">Ox.</div>
<div class="a" style="left:1060px;top:443px;width:37px;height:15px;background:#a8d6fb"></div><div class="a nw" style="left:1060px;width:37px;top:444px;text-align:center;font-weight:bold;font-size:12px;color:#111;line-height:14px">Wyck.</div>
<div class="a" style="left:1098px;top:443px;width:27px;height:15px;background:#a8d6fb"></div><div class="a nw" style="left:1098px;width:27px;top:444px;text-align:center;font-weight:bold;font-size:12px;color:#111;line-height:14px">Site</div>
<div class="a" style="left:1126px;top:443px;width:54px;height:15px;background:#a8d6fb"></div><div class="a nw" style="left:1126px;width:54px;top:444px;text-align:center;font-weight:bold;font-size:12px;color:#111;line-height:14px">x/a</div>
<div class="a" style="left:1181px;top:443px;width:21px;height:15px;background:#a8d6fb"></div><div class="a nw" style="left:1181px;width:21px;top:444px;text-align:center;font-weight:bold;font-size:12px;color:#111;line-height:14px">y/b</div>
<div class="a" style="left:1203px;top:443px;width:59px;height:15px;background:#a8d6fb"></div><div class="a nw" style="left:1203px;width:59px;top:444px;text-align:center;font-weight:bold;font-size:12px;color:#111;line-height:14px">z/c</div>
<div class="a nw" style="left:1006px;top:461px;font-size:12px;color:#111;line-height:15px">V</div>
<div class="a nw" style="left:1042px;top:461px;font-size:12px;color:#111;line-height:15px">0</div>
<div class="a nw" style="left:1065px;top:461px;font-size:12px;color:#111;line-height:15px">12c</div>
<div class="a nw" style="left:1104px;top:461px;font-size:12px;color:#111;line-height:15px">3.</div>
<div class="a nw" style="left:1131px;top:461px;font-size:12px;color:#111;line-height:15px">0</div>
<div class="a nw" style="left:1186px;top:461px;font-size:12px;color:#111;line-height:15px">0</div>
<div class="a nw" style="left:1208px;top:461px;font-size:12px;color:#111;line-height:15px">0.34634(4)</div>
<div class="a nw" style="left:1006px;top:477px;font-size:12px;color:#111;line-height:15px">O</div>
<div class="a nw" style="left:1042px;top:477px;font-size:12px;color:#111;line-height:15px">0</div>
<div class="a nw" style="left:1065px;top:477px;font-size:12px;color:#111;line-height:15px">18e</div>
<div class="a nw" style="left:1104px;top:477px;font-size:12px;color:#111;line-height:15px">.2</div>
<div class="a nw" style="left:1131px;top:477px;font-size:12px;color:#111;line-height:15px">0.3122(5)</div>
<div class="a nw" style="left:1186px;top:477px;font-size:12px;color:#111;line-height:15px">0</div>
<div class="a nw" style="left:1208px;top:477px;font-size:12px;color:#111;line-height:15px">1/4</div>
<div class="a" style="left:988px;top:497px;width:441px;height:225px;background:#fff;border:1px solid #9c9c9c;border-bottom:none"></div>
<div class="a" style="left:989px;top:498px;width:439px;height:19px;background:#f0f0f0;border-bottom:1px solid #a0a0a0"></div>
<div class="a nw" style="left:996px;top:502px;font-size:12px;color:#000">Properties</div>
<svg class="a" style="left:1412px;top:503px" width="11" height="10" viewBox="0 0 11 10"><path d="M1 1l9 8M10 1L1 9" stroke="#707070" stroke-width="2.2"/></svg>
<div class="a" style="left:989px;top:517px;width:439px;height:25px;background:#f0f0f0"></div>
<div class="a" style="left:991px;top:519px;width:435px;height:21px;background:#fff;border:1px solid #e2e2e2"></div>
<div class="a nw" style="left:996px;top:524px;font-size:11px;color:#000;letter-spacing:-0.15px">Structure picture contents</div>
<svg class="a" style="left:1413px;top:527px" width="9" height="6" viewBox="0 0 9 6"><path d="M0 1h9L4.5 5.5z" fill="#111"/></svg>
<div class="a" style="left:989px;top:542px;width:424px;height:21px;background:linear-gradient(#fdfdfd,#f4f4f4 50%,#e8e8e8);border-bottom:1px solid #d8d8d8"></div>
<div class="a" style="left:1229px;top:542px;width:1px;height:180px;background:#ececec"></div>
<div class="a" style="left:1311px;top:542px;width:1px;height:180px;background:#ececec"></div>
<div class="a" style="left:1391px;top:542px;width:1px;height:180px;background:#ececec"></div>
<div class="a" style="left:989px;top:582px;width:424px;height:1px;background:#ececec"></div>
<div class="a nw" style="left:995px;top:568px;font-size:12px;color:#111;letter-spacing:-0.1px">Atomic parameters (asym. sites)</div>
<div class="a nw" style="left:1200px;width:104px;top:568px;text-align:right;font-size:12px;color:#111">2</div>
<div class="a nw" style="left:1300px;width:85px;top:568px;text-align:right;font-size:12px;color:#111">(2)</div>
<div class="a" style="left:989px;top:601px;width:424px;height:1px;background:#ececec"></div>
<div class="a nw" style="left:995px;top:587px;font-size:12px;color:#111;letter-spacing:-0.1px">Symmetry records</div>
<div class="a nw" style="left:1200px;width:104px;top:587px;text-align:right;font-size:12px;color:#111">12</div>
<div class="a nw" style="left:1300px;width:85px;top:587px;text-align:right;font-size:12px;color:#111"></div>
<div class="a" style="left:989px;top:620px;width:424px;height:1px;background:#ececec"></div>
<div class="a nw" style="left:995px;top:606px;font-size:12px;color:#111;letter-spacing:-0.1px">Atoms in unit cell</div>
<div class="a nw" style="left:1200px;width:104px;top:606px;text-align:right;font-size:12px;color:#111">30</div>
<div class="a nw" style="left:1300px;width:85px;top:606px;text-align:right;font-size:12px;color:#111"></div>
<div class="a" style="left:989px;top:639px;width:424px;height:1px;background:#ececec"></div>
<div class="a nw" style="left:995px;top:625px;font-size:12px;color:#111;letter-spacing:-0.1px">Bond parameters (non-bonding contacts, ...</div>
<div class="a nw" style="left:1200px;width:104px;top:625px;text-align:right;font-size:12px;color:#111">0</div>
<div class="a nw" style="left:1300px;width:85px;top:625px;text-align:right;font-size:12px;color:#111">(0, 0)</div>
<div class="a" style="left:989px;top:658px;width:424px;height:1px;background:#ececec"></div>
<div class="a nw" style="left:995px;top:644px;font-size:12px;color:#111;letter-spacing:-0.1px">Molecular units (mol./polym. sites)</div>
<div class="a nw" style="left:1200px;width:104px;top:644px;text-align:right;font-size:12px;color:#111">1</div>
<div class="a nw" style="left:1300px;width:85px;top:644px;text-align:right;font-size:12px;color:#111">(0, 1)</div>
<div class="a" style="left:989px;top:677px;width:424px;height:1px;background:#ececec"></div>
<div class="a nw" style="left:995px;top:663px;font-size:12px;color:#111;letter-spacing:-0.1px">Created atoms</div>
<div class="a nw" style="left:1200px;width:104px;top:663px;text-align:right;font-size:12px;color:#111">164</div>
<div class="a nw" style="left:1300px;width:85px;top:663px;text-align:right;font-size:12px;color:#111"></div>
<div class="a" style="left:989px;top:696px;width:424px;height:1px;background:#ececec"></div>
<div class="a nw" style="left:995px;top:682px;font-size:12px;color:#111;letter-spacing:-0.1px">Created bonds (H-bonds/contacts)</div>
<div class="a nw" style="left:1200px;width:104px;top:682px;text-align:right;font-size:12px;color:#111">175</div>
<div class="a nw" style="left:1300px;width:85px;top:682px;text-align:right;font-size:12px;color:#111">(0, 0)</div>
<div class="a" style="left:989px;top:715px;width:424px;height:1px;background:#ececec"></div>
<div class="a nw" style="left:995px;top:701px;font-size:12px;color:#111;letter-spacing:-0.1px">Created molecules (complete)</div>
<div class="a nw" style="left:1200px;width:104px;top:701px;text-align:right;font-size:12px;color:#111">0</div>
<div class="a nw" style="left:1300px;width:85px;top:701px;text-align:right;font-size:12px;color:#111">(0)</div>
<div class="a" style="left:1413px;top:542px;width:15px;height:180px;background:linear-gradient(90deg,#e8e8e8,#f6f6f6 50%,#ececec)"></div>
<svg class="a" style="left:1416px;top:548px" width="9" height="6" viewBox="0 0 9 6"><path d="M0 5l4.5-4.5L9 5z" fill="#333"/></svg>
<div class="a" style="left:1413px;top:561px;width:14px;height:62px;background:linear-gradient(90deg,#f2f2f2,#dadada 50%,#c6c6c6);border:1px solid #a6a6a6;border-radius:2px"></div>
<div class="a" style="left:1416px;top:587px;width:8px;height:7px;border-top:1px solid #555;border-bottom:1px solid #555"><div style="margin-top:2px;border-top:1px solid #555"></div></div>
<svg class="a" style="left:1416px;top:710px" width="9" height="6" viewBox="0 0 9 6"><path d="M0 1h9L4.5 5.5z" fill="#333"/></svg>
<!-- BOTTOM TOOLBAR -->
<div id="btbrow" class="a"></div>
<div class="a tb" style="left:10px;top:723px;width:695px;height:25px"></div>
<div class="a grip" style="left:15px;top:728px;height:15px"></div>
<svg class="a" style="left:41px;top:726px" width="18" height="18" viewBox="0 0 18 18"><rect x="1.5" y="2.5" width="12" height="11" fill="#fff" stroke="#333"/><path d="M3 5.5h8M3 7.5h8M3 9.5h5" stroke="#444"/><path d="M8 12h6v-2l4 3.5-4 3.5v-2H8z" fill="#30a0e0"/></svg>
<svg class="a" style="left:63px;top:726px" width="18" height="18" viewBox="0 0 18 18"><path d="M2 16L14 4" stroke="#222" stroke-width="2.5"/><rect x="1" y="9" width="6" height="7" fill="#f0e030" transform="rotate(-45 4 12)"/><path d="M13 1v4M11 3h4M16 6v3M14.5 7.5h3" stroke="#333"/><circle cx="4" cy="14" r="2.5" fill="#e8d820"/></svg>
<svg class="a" style="left:85px;top:726px" width="18" height="18" viewBox="0 0 18 18"><rect x="1.5" y="2.5" width="15" height="12" fill="#fff" stroke="#222"/><path d="M4 16L10 8" stroke="#222" stroke-width="2"/><path d="M7 6l6 0 1 4z" fill="#c8a020" stroke="#333"/></svg>
<svg class="a" style="left:107px;top:734px" width="7" height="4" viewBox="0 0 7 4"><path d="M0 0h7L3.5 4z" fill="#333"/></svg>
<div class="a sep" style="left:120px;top:726px;height:19px"></div>
<svg class="a" style="left:125px;top:726px" width="18" height="18" viewBox="0 0 18 18"><path d="M2 12l6-8 8 4-4 8z" fill="#f0f0a0" stroke="#222" stroke-width="1.2"/><path d="M8 4l8 4-3 3-8-4z" fill="#b0a040"/></svg>
<svg class="a" style="left:147px;top:726px" width="18" height="18" viewBox="0 0 18 18"><circle cx="5" cy="12" r="4" fill="#f8f020" stroke="#222"/><circle cx="13" cy="12" r="4" fill="#f8f020" stroke="#222"/><circle cx="12" cy="5" r="4" fill="#f8f020" stroke="#222"/><path d="M1 5h6M4 2v6" stroke="#111" stroke-width="1.6"/></svg>
<svg class="a" style="left:169px;top:726px" width="18" height="18" viewBox="0 0 18 18"><path d="M1 9h7M4.5 5.5v7" stroke="#111" stroke-width="2"/><circle cx="12.5" cy="9" r="4.2" fill="#f8f020" stroke="#222"/></svg>
<svg class="a" style="left:190px;top:726px" width="18" height="18" viewBox="0 0 18 18"><circle cx="4" cy="14" r="3" fill="#fff" stroke="#222"/><circle cx="14" cy="14" r="3" fill="#fff" stroke="#222"/><path d="M6 4a3 3 0 1 1 4 3l-1 1v2" fill="none" stroke="#111" stroke-width="1.8"/><circle cx="9" cy="13" r="1" fill="#111"/></svg>
<svg class="a" style="left:213px;top:726px" width="18" height="18" viewBox="0 0 18 18"><rect x="3" y="3" width="12" height="12" fill="#dde4ff" stroke="#1a30c0" stroke-width="1.2"/><path d="M3 3l12 12M15 3L3 15" stroke="#1a30c0"/><circle cx="3" cy="3" r="2.2" fill="#fff" stroke="#111"/><circle cx="15" cy="3" r="2.2" fill="#fff" stroke="#111"/><circle cx="3" cy="15" r="2.2" fill="#fff" stroke="#111"/><circle cx="15" cy="15" r="2.2" fill="#fff" stroke="#111"/></svg>
<svg class="a" style="left:235px;top:726px" width="18" height="18" viewBox="0 0 18 18"><circle cx="5" cy="14" r="3" fill="#eee" stroke="#999"/><circle cx="13" cy="14" r="3" fill="#eee" stroke="#999"/><path d="M7 2h4v5h3l-5 5-5-5h3z" fill="#f4f4f4" stroke="#999"/></svg>
<svg class="a" style="left:256px;top:726px" width="18" height="18" viewBox="0 0 18 18"><circle cx="9" cy="9" r="7" fill="#fff" stroke="#222" stroke-dasharray="1.5 1"/><circle cx="9" cy="9" r="4.5" fill="#807a20" stroke="#222"/></svg>
<svg class="a" style="left:279px;top:734px" width="7" height="4" viewBox="0 0 7 4"><path d="M0 0h7L3.5 4z" fill="#333"/></svg>
<div class="a sep" style="left:290px;top:726px;height:19px"></div>
<svg class="a" style="left:295px;top:726px" width="18" height="18" viewBox="0 0 18 18"><path d="M5 2.5h8l4 6.5-4 6.5H5L1 9z" fill="#dce8ff" stroke="#1020c0" stroke-width="2"/></svg>
<svg class="a" style="left:318px;top:726px" width="18" height="18" viewBox="0 0 18 18"><path d="M5 2.5h8l4 6.5-4 6.5H5L1 9z" fill="none" stroke="#f0f040" stroke-width="2.2"/><path d="M5 2.5L1 9l4 6.5h5" fill="none" stroke="#1020c0" stroke-width="2"/></svg>
<div class="a nw" style="left:341px;top:730px;font-size:11px;color:#111;letter-spacing:-0.3px">Pg.</div>
<div class="a nw" style="left:362px;top:730px;font-size:11px;color:#111;letter-spacing:-0.3px">Gw.</div>
<div class="a nw" style="left:384px;top:730px;font-size:11px;color:#111;letter-spacing:-0.3px">Cut</div>
<div class="a sep" style="left:406px;top:726px;height:19px"></div>
<div class="a nw" style="left:413px;top:730px;font-size:11px;color:#111;letter-spacing:-0.3px">X<sub style="font-size:9px">A</sub></div>
<div class="a nw" style="left:434px;top:730px;font-size:11px;color:#111;letter-spacing:-0.3px">X<sub style="font-size:9px">M</sub></div>
<div class="a nw" style="left:456px;top:730px;font-size:11px;color:#111;letter-spacing:-0.3px">M<sub style="font-size:9px">M</sub></div>
<div class="a nw" style="left:478px;top:730px;font-size:11px;color:#a0a0a0;letter-spacing:-0.3px">Rd.</div>
<div class="a sep" style="left:500px;top:726px;height:19px"></div>
<svg class="a" style="left:505px;top:726px" width="18" height="18" viewBox="0 0 18 18"><rect x="2.5" y="5.5" width="10" height="10" fill="none" stroke="#1a30c0" stroke-width="1.4"/><rect x="5.5" y="2.5" width="10" height="10" fill="none" stroke="#1a30c0" stroke-width="1.4"/><path d="M2.5 5.5l3-3M12.5 5.5l3-3M2.5 15.5l3-3M12.5 15.5l3-3" stroke="#1a30c0"/></svg>
<svg class="a" style="left:528px;top:726px" width="18" height="18" viewBox="0 0 18 18"><path d="M9 1l8 8-8 8-8-8z" fill="none" stroke="#555" stroke-width="1.2"/><path d="M1 9h16M9 1v16" stroke="#777"/></svg>
<svg class="a" style="left:550px;top:726px" width="18" height="18" viewBox="0 0 18 18"><path d="M2 6.5h14M2 10.5h14" stroke="#e0e020" stroke-width="3"/><path d="M2 3l14 12M16 3L2 15" stroke="#e02020" stroke-width="2.4"/><circle cx="4" cy="5" r="2" fill="#333"/><circle cx="14" cy="5" r="2" fill="#333"/></svg>
<svg class="a" style="left:572px;top:734px" width="7" height="4" viewBox="0 0 7 4"><path d="M0 0h7L3.5 4z" fill="#333"/></svg>
<svg class="a" style="left:582px;top:726px" width="18" height="18" viewBox="0 0 18 18"><circle cx="5" cy="14" r="3" fill="#fff" stroke="#555"/><path d="M7 11l3-3" stroke="#555"/><text x="9" y="8" font-size="8" font-weight="bold" fill="#777" font-family="Liberation Sans">Fe</text></svg>
<div class="a sep" style="left:605px;top:726px;height:19px"></div>
<svg class="a" style="left:610px;top:726px" width="18" height="18" viewBox="0 0 18 18"><rect x="1.5" y="1.5" width="15" height="15" fill="#fff" stroke="#1a2a80"/><path d="M9 3l3 3H6zM9 15l3-3H6zM3 9l3-3v6zM15 9l-3-3v6z" fill="#111"/><circle cx="9" cy="9" r="2.5" fill="#f0e020"/></svg>
<svg class="a" style="left:632px;top:734px" width="7" height="4" viewBox="0 0 7 4"><path d="M0 0h7L3.5 4z" fill="#333"/></svg>
<div class="a sep" style="left:645px;top:726px;height:19px"></div>
<svg class="a" style="left:650px;top:726px" width="18" height="18" viewBox="0 0 18 18"><text x="1" y="15" font-size="15" font-weight="bold" font-style="italic" fill="#1a2a9a" font-family="Liberation Serif">M</text></svg>
<svg class="a" style="left:671px;top:726px" width="18" height="18" viewBox="0 0 18 18"><rect x="1.5" y="1.5" width="15" height="15" fill="#fff" stroke="#1a2a80"/><circle cx="7" cy="8" r="4.5" fill="#e04040"/><circle cx="11" cy="10" r="4.5" fill="#20a090"/></svg>
<svg class="a" style="left:696px;top:735px" width="7" height="8" viewBox="0 0 7 8"><path d="M0 1h7M0 4h7L3.5 8z" stroke="#222" fill="#222"/></svg>
<div id="status" class="a"></div>
<div class="a nw st" style="left:12px;top:759px">Undo the last action</div>
<div class="a ss" style="left:709px;top:751px"></div>
<div class="a ss" style="left:812px;top:751px"></div>
<div class="a ss" style="left:839px;top:751px"></div>
<div class="a ss" style="left:867px;top:751px"></div>
<div class="a ss" style="left:895px;top:751px"></div>
<div class="a ss" style="left:999px;top:751px"></div>
<div class="a ss" style="left:1027px;top:751px"></div>
<div class="a ss" style="left:1071px;top:751px"></div>
<div class="a ss" style="left:1142px;top:751px"></div>
<div class="a ss" style="left:1213px;top:751px"></div>
<div class="a ss" style="left:1284px;top:751px"></div>
<div class="a ss" style="left:1348px;top:751px"></div>
<div class="a nw st" style="left:873px;top:759px">Sch</div>
<div class="a nw st" style="left:901px;top:759px">Manual</div>
<div class="a nw st" style="left:1005px;top:759px">OFF</div>
<div class="a nw st" style="left:1077px;top:759px">2 parms</div>
<div class="a nw st" style="left:1148px;top:759px">264 atoms</div>
<div class="a nw st" style="left:1219px;top:759px">351 bonds</div>
<div class="a nw st" style="left:1290px;top:759px">polymeric</div>
<div class="a nw st" style="left:1354px;top:759px">0 polyh.</div>
<svg class="a" style="left:1417px;top:754px" width="12" height="12" viewBox="0 0 12 12"><rect x="9" y="1" width="2" height="2" fill="#fff"/><rect x="9" y="5" width="2" height="2" fill="#fff"/><rect x="5" y="5" width="2" height="2" fill="#fff"/><rect x="9" y="9" width="2" height="2" fill="#fff"/><rect x="5" y="9" width="2" height="2" fill="#fff"/><rect x="1" y="9" width="2" height="2" fill="#fff"/></svg>
<div class="a" style="left:229px;top:78px;width:203px;height:278px;background:#fff;border:1px solid #9aa0aa;overflow:hidden">
 <div class="a" style="left:0;top:0;width:201px;height:59px;background:#3596f6"></div>
 <div class="a nw" style="left:2.5px;top:-1.5px;width:197.5px;overflow:hidden;color:#f4faff;font-size:11.75px;line-height:15px">Undo (1) Coordination Spheres Directly<br>Undo (2) Coordination Spheres Directly<br>Undo (3) Connect Atoms<br>Undo (4) Fill Unit Cell</div>
 <div class="a nw" style="left:2.5px;top:58.5px;color:#000;font-size:11.75px;line-height:15px">Undo (5) Destroy All<br>Undo (6) Viewing Direction<br>Undo (7) Auto-Build Scheme</div>
 <div class="a" style="left:0;top:104px;width:201px;height:23px;background:#d9dee6"></div>
 <div class="a nw" style="left:0;top:109px;width:201px;text-align:center;color:#1a1a1a;font-size:12px">Undo 4 Actions</div>
 <div class="a" style="left:0;top:127px;width:201px;height:149px;background:#0842f4"></div>
 <div class="a" style="left:28px;top:143px;width:151px;height:117px;background:#a6d6fb;border:1px solid #fff"></div>
 <div class="a" style="left:40px;top:158px;width:126px;height:91px;background:#000"></div>
 <svg class="a" style="left:44px;top:161px" width="12" height="12" viewBox="0 0 12 12"><path d="M2 1v8h6" stroke="#999" stroke-width="0.8" fill="none"/></svg>
</div>

</body></html>
